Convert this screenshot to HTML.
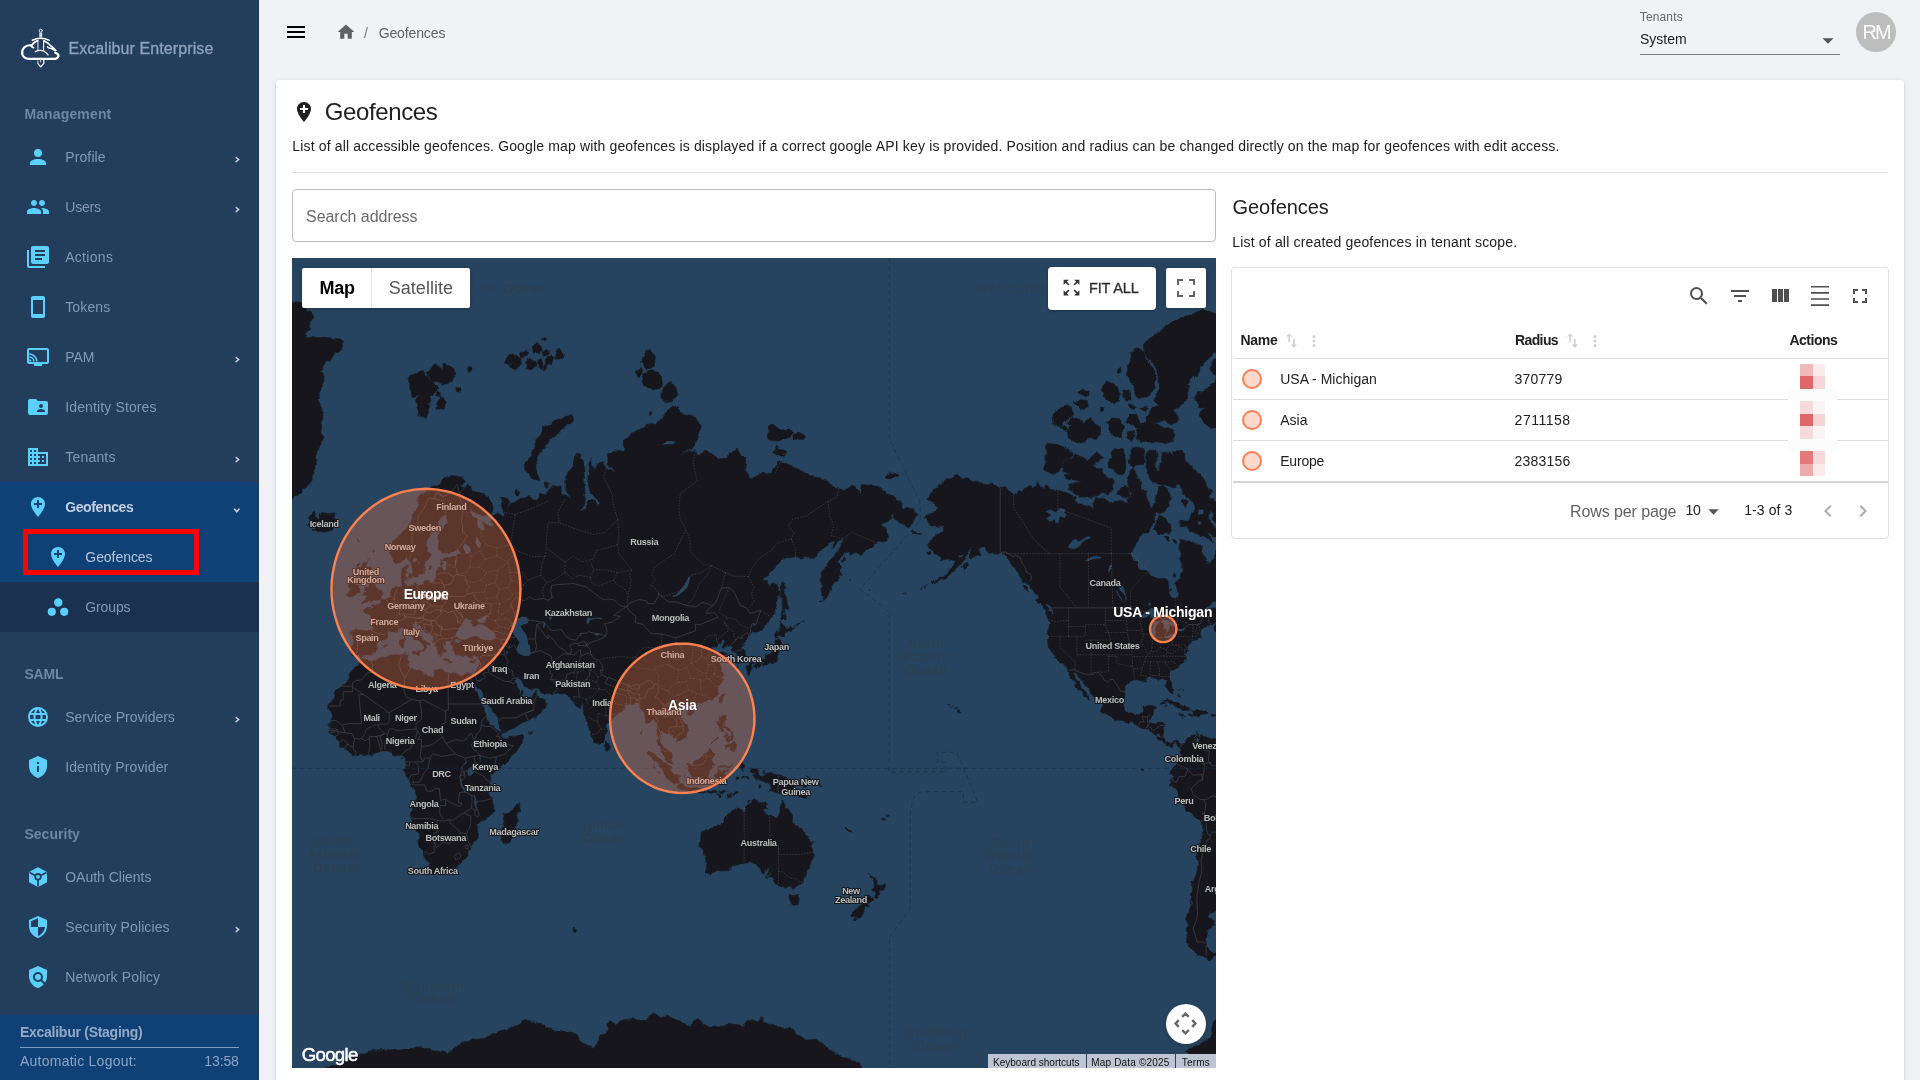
<!DOCTYPE html>
<html lang="en"><head><meta charset="utf-8"><title>Geofences</title>
<style>
*{box-sizing:border-box;margin:0;padding:0}
html,body{width:1920px;height:1080px;overflow:hidden}
body{will-change:transform;font-family:"Liberation Sans",sans-serif;background:#f0f2f6;color:#212121;position:relative;font-size:14px}
.abs{position:absolute;white-space:nowrap}
svg{display:block}
/* sidebar */
#side{position:absolute;left:0;top:0;width:259px;height:1080px;background:#233d5c;box-shadow:inset -1px 0 0 #1c3454}
#side .it{position:absolute;left:0;width:259px;height:50px}
#side .ic{position:absolute;left:26px;top:13px;width:24px;height:24px;fill:#5bd0ff}
#side .sub .ic{left:46px}
#side .tx{position:absolute;left:65px;top:0;line-height:50px;color:#8197b5;font-size:14px;letter-spacing:-0.1px}
#side .sub .tx{left:85px}
#side .ar{position:absolute;left:234.6px;top:24px;width:6px;height:7.2px;fill:#c9ccd2}
#side .hd{position:absolute;left:24px;color:#6d86a6;font-weight:bold;font-size:14px;letter-spacing:0.1px}
/* card */
#card{position:absolute;left:276px;top:80px;width:1628px;height:1010px;background:#fff;border-radius:4px;box-shadow:0 3px 1px -2px rgba(0,0,0,.2),0 2px 2px 0 rgba(0,0,0,.14),0 1px 5px 0 rgba(0,0,0,.12)}
.g{fill:#616161}
</style></head><body>

<div id="side">
<svg class="abs" style="left:18px;top:26px" width="44" height="44" viewBox="18 26 44 44" fill="none" stroke="#fff" stroke-linecap="round" stroke-linejoin="round">
<circle cx="40.7" cy="30.7" r="1.55" stroke-width="0.85"/>
<rect x="39.3" y="32.4" width="2.9" height="5.4" fill="#aab8ca" stroke="none"/>
<path d="M39.3 33.9h2.9M39.3 35.7h2.9" stroke-width="0.8" stroke-linecap="butt"/>
<path d="M32.3 40.2Q40.7 36.2 49.4 40.4" stroke-width="1.5"/>
<path d="M37.9 40.6V50.2" stroke="#b9c4d2" stroke-width="1.3" stroke-linecap="butt"/>
<path d="M43.6 40.6V50.6" stroke-width="1.1" stroke-linecap="butt"/>
<path d="M33.4 47.6Q31.2 46.9 31.4 45.5Q33.9 42 37.6 40.7" stroke-width="1.9"/>
<path d="M43.9 40.9Q48.6 42.8 51.2 46.2Q53.6 48.2 55.8 50.6" stroke-width="1.7"/>
<path d="M47.6 46.7Q48 48 49.2 48.1Q52 48.4 54.6 50.4" stroke-width="1.5"/>
<path d="M31.2 45.4Q27.2 44.6 24 47.6Q21.2 50.8 22.4 54.6Q24 58.6 28.6 58.9H55.4Q57.8 58.3 58.5 56.2Q58.7 53.8 55.2 52.7" stroke-width="2.2"/>
<path d="M35.3 51.6Q40 49.2 44 51.2Q46.5 52.7 48.1 54.9" stroke-width="1.3"/>
<path d="M43.8 59.6V63.4L40.7 66.8L37.9 63.6" stroke-width="1.25"/>
<path d="M37.9 63.6V61.2" stroke="#b9c4d2" stroke-width="1.2"/>
<path d="M40.7 58.2V62" stroke="#dfe5ec" stroke-width="0.9"/>
</svg>

<div class="abs" style="left:68.4px;top:37.26px;font-size:16px;line-height:24px;letter-spacing:0.091px;color:#8ea3bf;-webkit-text-stroke:0.3px #8ea3bf;">Excalibur Enterprise</div>
<div class="abs" style="left:24.4px;top:103.65px;font-size:14px;line-height:21px;letter-spacing:0.142px;font-weight:bold;color:#6d86a6;">Management</div>
<div class="it" style="top:132px;"><svg class="ic" viewBox="0 0 24 24"><path d="M12 4a4 4 0 0 1 4 4 4 4 0 0 1-4 4 4 4 0 0 1-4-4 4 4 0 0 1 4-4m0 10c4.42 0 8 1.79 8 4v2H4v-2c0-2.21 3.58-4 8-4"/></svg><div class="abs" style="left:65.2px;top:14.65px;font-size:14px;line-height:21px;letter-spacing:0.13px;color:#8197b5;">Profile</div><svg class="ar" viewBox="0 0 8 10"><path d="M1.2 0.6 6.6 5 1.2 9.4 0.2 7.6 3.3 5 0.2 2.4z"/></svg></div>
<div class="it" style="top:182px;"><svg class="ic" viewBox="0 0 24 24"><path d="M16 13c-.29 0-.62.02-.97.05 1.16.84 1.97 1.97 1.97 3.45V19h6v-2.5c0-2.33-4.67-3.5-7-3.5m-8 0c-2.33 0-7 1.17-7 3.5V19h14v-2.5c0-2.33-4.67-3.5-7-3.5m0-2c1.66 0 2.99-1.34 2.99-3S9.66 5 8 5C6.34 5 5 6.34 5 8s1.34 3 3 3m8 0c1.66 0 2.99-1.34 2.99-3S17.66 5 16 5c-1.66 0-3 1.34-3 3s1.34 3 3 3z"/></svg><div class="abs" style="left:65.2px;top:14.65px;font-size:14px;line-height:21px;letter-spacing:-0.172px;color:#8197b5;">Users</div><svg class="ar" viewBox="0 0 8 10"><path d="M1.2 0.6 6.6 5 1.2 9.4 0.2 7.6 3.3 5 0.2 2.4z"/></svg></div>
<div class="it" style="top:232px;"><svg class="ic" viewBox="0 0 24 24"><path d="M16 15H9v-2h7m3-2H9V9h10m0-2H9V5h10m2-4H7c-1.11 0-2 .89-2 2v14a2 2 0 0 0 2 2h14c1.11 0 2-.89 2-2V3a2 2 0 0 0-2-2M3 5v16h16v2H3a2 2 0 0 1-2-2V5z"/></svg><div class="abs" style="left:65.2px;top:14.65px;font-size:14px;line-height:21px;letter-spacing:0.298px;color:#8197b5;">Actions</div></div>
<div class="it" style="top:282px;"><svg class="ic" viewBox="0 0 24 24"><path d="M17 19H7V5h10m0-4H7c-1.11 0-2 .89-2 2v18a2 2 0 0 0 2 2h10a2 2 0 0 0 2-2V3a2 2 0 0 0-2-2"/></svg><div class="abs" style="left:65.2px;top:14.65px;font-size:14px;line-height:21px;letter-spacing:0.139px;color:#8197b5;">Tokens</div></div>
<div class="it" style="top:332px;"><svg class="ic" viewBox="0 0 24 24"><path fill-rule="evenodd" d="M3 3h18a2 2 0 0 1 2 2v12a2 2 0 0 1-2 2H3a2 2 0 0 1-2-2V5a2 2 0 0 1 2-2zM3 5v12h18V5z"/><path d="M8 19h8v2H8z"/><g transform="translate(3.3,16.5) scale(0.75) translate(-1,-21)"><path d="M1 10v2a9 9 0 0 1 9 9h2c0-6.08-4.93-11-11-11m0 4v2a5 5 0 0 1 5 5h2a7 7 0 0 0-7-7m0 4v3h3a3 3 0 0 0-3-3"/></g></svg><div class="abs" style="left:65.2px;top:14.65px;font-size:14px;line-height:21px;letter-spacing:-0.033px;color:#8197b5;">PAM</div><svg class="ar" viewBox="0 0 8 10"><path d="M1.2 0.6 6.6 5 1.2 9.4 0.2 7.6 3.3 5 0.2 2.4z"/></svg></div>
<div class="it" style="top:382px;"><svg class="ic" viewBox="0 0 24 24"><path d="M19 17h-8v-1c0-1.33 2.67-2 4-2s4 .67 4 2m-4-7a2 2 0 0 1 2 2 2 2 0 0 1-2 2 2 2 0 0 1-2-2 2 2 0 0 1 2-2m5-3h-8l-2-2H4c-1.11 0-2 .89-2 2v12a2 2 0 0 0 2 2h16a2 2 0 0 0 2-2V8a2 2 0 0 0-2-2"/></svg><div class="abs" style="left:65.2px;top:14.65px;font-size:14px;line-height:21px;letter-spacing:0.133px;color:#8197b5;">Identity Stores</div></div>
<div class="it" style="top:432px;"><svg class="ic" viewBox="0 0 24 24"><path d="M18 15h-2v2h2m0-6h-2v2h2m2 6h-8v-2h2v-2h-2v-2h2v-2h-2V9h8M10 7H8V5h2m0 6H8V9h2m0 6H8v-2h2m0 6H8v-2h2M6 7H4V5h2m0 6H4V9h2m0 6H4v-2h2m0 6H4v-2h2m6-10V3H2v18h20V7z"/></svg><div class="abs" style="left:65.2px;top:14.65px;font-size:14px;line-height:21px;letter-spacing:0.208px;color:#8197b5;">Tenants</div><svg class="ar" viewBox="0 0 8 10"><path d="M1.2 0.6 6.6 5 1.2 9.4 0.2 7.6 3.3 5 0.2 2.4z"/></svg></div>
<div class="abs" style="left:0;top:482px;width:259px;height:100px;background:#0f4076"></div>
<div class="it" style="top:482px;"><svg class="ic" viewBox="0 0 24 24"><path d="M12 2C8.14 2 5 5.14 5 9c0 5.25 7 13 7 13s7-7.75 7-13c0-3.86-3.14-7-7-7zm4 8h-3v3h-2v-3H8V8h3V5h2v3h3v2z"/></svg><div class="abs" style="left:65.2px;top:14.65px;font-size:14px;line-height:21px;letter-spacing:-0.377px;font-weight:bold;color:#c3d0e2;">Geofences</div><svg class="ar" style="left:233.4px;top:26.4px;width:7.6px;height:6px" viewBox="0 0 10 8"><path d="M0.6 1.2 5 6.6 9.4 1.2 7.6 0.2 5 3.3 2.4 0.2z"/></svg></div>
<div class="it sub" style="top:532px;"><svg class="ic" viewBox="0 0 24 24"><path d="M12 2C8.14 2 5 5.14 5 9c0 5.25 7 13 7 13s7-7.75 7-13c0-3.86-3.14-7-7-7zm4 8h-3v3h-2v-3H8V8h3V5h2v3h3v2z"/></svg><div class="abs" style="left:85.3px;top:14.65px;font-size:14px;line-height:21px;letter-spacing:-0.057px;color:#b4c3d9;">Geofences</div></div>
<div class="abs" style="left:22.6px;top:528.7px;width:176.2px;height:46.4px;border:5px solid #ff0000"></div>
<div class="it sub" style="top:582px;background:#1a3150;"><svg class="ic" viewBox="0 0 24 24"><circle cx="12.3" cy="7.5" r="4.2"/><circle cx="5.8" cy="16.8" r="4.1"/><circle cx="18.2" cy="16.8" r="4.1"/></svg><div class="abs" style="left:85.3px;top:14.65px;font-size:14px;line-height:21px;letter-spacing:-0.119px;color:#8197b5;">Groups</div></div>
<div class="abs" style="left:24.4px;top:663.65px;font-size:14px;line-height:21px;letter-spacing:-0.166px;font-weight:bold;color:#6d86a6;">SAML</div>
<div class="it" style="top:692px;"><svg class="ic" viewBox="0 0 24 24"><path d="M16.36 14c.08-.66.14-1.32.14-2s-.06-1.34-.14-2h3.38c.16.64.26 1.31.26 2s-.1 1.36-.26 2m-5.15 5.56c.6-1.11 1.06-2.31 1.38-3.56h2.95a8.03 8.03 0 0 1-4.33 3.56M14.34 14H9.66c-.1-.66-.16-1.32-.16-2s.06-1.35.16-2h4.68c.09.65.16 1.32.16 2s-.07 1.34-.16 2M12 19.96c-.83-1.2-1.5-2.53-1.91-3.96h3.82c-.41 1.43-1.08 2.76-1.91 3.96M8 8H5.08A7.92 7.92 0 0 1 9.4 4.44C8.8 5.55 8.35 6.75 8 8m-2.92 8H8c.35 1.25.8 2.45 1.4 3.56A8 8 0 0 1 5.08 16m-.82-2C4.1 13.36 4 12.69 4 12s.1-1.36.26-2h3.38c-.08.66-.14 1.32-.14 2s.06 1.34.14 2M12 4.03c.83 1.2 1.5 2.54 1.91 3.97h-3.82c.41-1.43 1.08-2.77 1.91-3.97M18.92 8h-2.95a15.7 15.7 0 0 0-1.38-3.56c1.84.63 3.37 1.9 4.33 3.56M12 2C6.47 2 2 6.5 2 12a10 10 0 0 0 10 10 10 10 0 0 0 10-10A10 10 0 0 0 12 2"/></svg><div class="abs" style="left:65.2px;top:14.65px;font-size:14px;line-height:21px;letter-spacing:-0.001px;color:#8197b5;">Service Providers</div><svg class="ar" viewBox="0 0 8 10"><path d="M1.2 0.6 6.6 5 1.2 9.4 0.2 7.6 3.3 5 0.2 2.4z"/></svg></div>
<div class="it" style="top:742px;"><svg class="ic" viewBox="0 0 24 24"><path d="M12 1 3 5v6c0 5.55 3.84 10.74 9 12 5.16-1.26 9-6.45 9-12V5M11 7h2v2h-2m0 2h2v6h-2"/></svg><div class="abs" style="left:65.2px;top:14.65px;font-size:14px;line-height:21px;letter-spacing:0.119px;color:#8197b5;">Identity Provider</div></div>
<div class="abs" style="left:24.4px;top:823.65px;font-size:14px;line-height:21px;letter-spacing:0.031px;font-weight:bold;color:#6d86a6;">Security</div>
<div class="it" style="top:852px;"><svg class="ic" viewBox="0 0 24 24"><path d="M12 2.2 21 7v10.2L12 22 3 17.2V7z"/><path d="M12 12 3.6 7.4M12 12l8.4-4.6M12 12v9.6" stroke="#233d5c" stroke-width="1.7" fill="none"/><circle cx="12" cy="11.8" r="3.7" fill="#233d5c"/><circle cx="12" cy="11.8" r="1.9"/></svg><div class="abs" style="left:65.2px;top:14.65px;font-size:14px;line-height:21px;letter-spacing:-0.014px;color:#8197b5;">OAuth Clients</div></div>
<div class="it" style="top:902px;"><svg class="ic" viewBox="0 0 24 24"><path d="M12 12h7c-.53 4.11-3.28 7.78-7 8.92zH5V6.3l7-3.11M12 1 3 5v6c0 5.55 3.84 10.73 9 12 5.16-1.27 9-6.45 9-12V5z"/></svg><div class="abs" style="left:65.2px;top:14.65px;font-size:14px;line-height:21px;letter-spacing:0.105px;color:#8197b5;">Security Policies</div><svg class="ar" viewBox="0 0 8 10"><path d="M1.2 0.6 6.6 5 1.2 9.4 0.2 7.6 3.3 5 0.2 2.4z"/></svg></div>
<div class="it" style="top:952px;"><svg class="ic" viewBox="0 0 24 24"><path d="M12 9a3 3 0 0 1 3 3 3 3 0 0 1-3 3 3 3 0 0 1-3-3 3 3 0 0 1 3-3m5.86 10.31C16.23 21.22 14.28 22.45 12 23c-2.56-.61-4.7-2.07-6.42-4.37C3.86 16.34 3 13.8 3 11V5l9-4 9 4v6c0 2.39-.64 4.61-1.92 6.67l-2.91-2.91c.52-.79.83-1.76.83-2.76a5 5 0 0 0-5-5 5 5 0 0 0-5 5 5 5 0 0 0 5 5c1 0 1.97-.31 2.76-.83z"/></svg><div class="abs" style="left:65.2px;top:14.65px;font-size:14px;line-height:21px;letter-spacing:0.172px;color:#8197b5;">Network Policy</div></div>
<div class="abs" style="left:0;top:1015px;width:259px;height:65px;background:#0f4076"></div>
<div class="abs" style="left:20px;top:1021.65px;font-size:14px;line-height:21px;letter-spacing:-0.268px;font-weight:bold;color:#93a9c6;">Excalibur (Staging)</div>
<div class="abs" style="left:20px;top:1046.5px;width:219px;height:1px;background:#7f9bbd"></div>
<div class="abs" style="left:20px;top:1050.65px;font-size:14px;line-height:21px;letter-spacing:0.243px;color:#8da4c2;">Automatic Logout:</div>
<div class="abs" style="left:204.3px;top:1050.65px;font-size:14px;line-height:21px;letter-spacing:-0.108px;color:#8da4c2;">13:58</div>
</div>
<svg class="abs" style="left:284px;top:20px" width="24" height="24" viewBox="0 0 24 24" fill="#000" ><path d="M3 6h18v2H3zm0 5h18v2H3zm0 5h18v2H3z"/></svg>
<svg class="abs" style="left:336.3px;top:22.2px" width="20" height="20" viewBox="0 0 24 24" fill="#616161" ><path d="M10 20v-6h4v6h5v-8h3L12 3 2 12h3v8z"/></svg>
<div class="abs" style="left:364px;top:22.65px;font-size:14px;line-height:21px;color:#757575;">/</div>
<div class="abs" style="left:378.7px;top:22.65px;font-size:14px;line-height:21px;letter-spacing:-0.124px;color:#616161;">Geofences</div>
<div class="abs" style="left:1639.8px;top:7.84px;font-size:12px;line-height:18px;letter-spacing:0.139px;color:#666;">Tenants</div>
<div class="abs" style="left:1640px;top:28.95px;font-size:14px;line-height:21px;letter-spacing:0.004px;color:#212121;">System</div>
<svg class="abs" style="left:1822px;top:37.5px" width="12" height="6" viewBox="0 0 12 6"><path d="M0.5 0.3h11L6 5.8z" fill="#555"/></svg>
<div class="abs" style="left:1640px;top:54px;width:200px;height:1px;background:#7a7a7a"></div>
<div class="abs" style="left:1856px;top:12px;width:40px;height:40px;border-radius:50%;background:#bdbdbd"></div>
<div class="abs" style="left:1862.5px;top:17.07px;font-size:20px;line-height:30px;letter-spacing:-2.052px;color:#fff;">RM</div>
<div id="card"></div>
<svg class="abs" style="left:292px;top:100px" width="24" height="24" viewBox="0 0 24 24" fill="#212121" ><path d="M12 2C8.14 2 5 5.14 5 9c0 5.25 7 13 7 13s7-7.75 7-13c0-3.86-3.14-7-7-7zm4 8h-3v3h-2v-3H8V8h3V5h2v3h3v2z"/></svg>
<div class="abs" style="left:324.7px;top:94.28px;font-size:24px;line-height:36px;letter-spacing:-0.364px;color:#212121;">Geofences</div>
<div class="abs" style="left:292.3px;top:135.65px;font-size:14px;line-height:21px;letter-spacing:0.149px;color:#212121;">List of all accessible geofences. Google map with geofences is displayed if a correct google API key is provided. Position and radius can be changed directly on the map for geofences with edit access.</div>
<div class="abs" style="left:292px;top:172px;width:1596px;height:1px;background:#e0e0e0"></div>
<div class="abs" style="left:292px;top:188.8px;width:924px;height:52.9px;border:1px solid #bdbdbd;border-radius:4px;background:#fff"></div>
<div class="abs" style="left:306.0px;top:204.76px;font-size:16px;line-height:24px;letter-spacing:-0.04px;color:#6a6a6a;">Search address</div>
<svg class="abs" style="left:292px;top:258px" width="924" height="810" viewBox="292 258 924 810" font-family="'Liberation Sans',sans-serif">
<rect x="292" y="258" width="924" height="810" fill="#26445f"/>
<defs><filter id="rough" filterUnits="userSpaceOnUse" x="280" y="250" width="950" height="830"><feTurbulence type="fractalNoise" baseFrequency="0.1" numOctaves="3" seed="11" result="n"/><feDisplacementMap in="SourceGraphic" in2="n" scale="6" xChannelSelector="R" yChannelSelector="G"/></filter></defs>
<path d="M360.5,659.0 362.2,658.7 366.2,661.1 368.8,660.8 371.0,661.5 375.6,659.4 380.7,656.9 386.0,655.5 391.5,655.1 396.1,654.8 399.5,655.1 405.2,653.7 408.6,654.4 407.5,656.9 407.7,659.0 408.9,661.1 408.0,662.8 406.0,665.6 408.9,667.0 410.3,668.3 414.8,669.0 420.3,670.7 424.5,674.7 431.3,677.7 434.2,676.0 434.3,671.7 439.0,669.0 442.7,669.3 445.6,671.7 448.7,673.4 454.7,674.0 459.8,675.7 462.3,674.7 465.5,673.7 468.0,673.7 469.2,674.5 469.9,678.8 470.3,681.9 473.4,687.4 474.9,691.3 478.3,697.8 482.3,704.0 483.1,707.7 483.3,711.3 485.4,715.2 488.2,719.1 489.5,723.3 493.4,725.9 498.8,730.9 500.5,732.4 500.0,735.0 501.0,735.7 505.3,738.3 511.6,737.0 517.2,735.8 523.1,734.3 523.5,738.3 519.2,745.4 515.3,753.1 506.3,762.4 498.3,769.2 493.6,774.7 490.2,779.7 488.5,782.7 489.1,787.6 489.7,793.6 491.6,797.7 492.8,798.8 492.6,805.5 493.2,811.4 490.8,814.9 482.3,820.0 476.4,825.7 477.4,829.3 477.7,832.4 478.3,838.2 472.9,841.7 470.0,844.7 470.7,848.0 468.6,853.8 465.6,857.2 461.2,863.0 456.7,867.7 450.1,871.0 447.8,871.8 443.9,871.3 440.2,871.8 434.2,873.9 429.9,872.3 429.6,870.8 428.2,867.1 429.1,863.0 426.2,857.7 424.1,853.2 420.4,846.9 418.8,840.1 418.5,835.3 415.7,829.3 412.6,823.3 410.7,818.0 411.9,812.0 412.9,807.0 415.8,803.6 416.4,798.8 414.3,794.2 415.0,793.3 413.9,789.0 412.4,785.4 412.0,784.0 411.0,781.9 407.6,777.9 404.0,773.9 402.2,770.2 404.2,767.1 404.6,765.4 405.2,761.7 405.5,759.7 404.9,756.8 402.9,756.8 401.5,755.1 397.8,755.7 394.4,756.0 392.4,753.1 390.4,751.1 387.0,750.0 384.1,750.1 380.7,750.8 376.7,752.4 373.7,753.7 371.3,754.7 368.8,753.7 365.9,753.2 360.2,754.0 355.4,755.8 351.7,754.0 346.6,750.2 344.3,748.2 341.7,746.8 339.6,743.9 338.3,741.1 335.8,737.9 334.1,736.7 332.9,734.3 329.8,732.9 330.1,729.6 329.5,727.7 327.7,725.9 329.5,724.2 330.4,721.9 331.2,719.1 331.8,715.8 330.4,711.9 328.8,707.7 328.9,706.2 330.7,702.5 331.9,698.8 334.9,695.7 336.1,691.3 339.2,688.1 340.6,685.3 345.2,683.6 348.3,680.6 350.0,677.4 349.1,676.5 349.4,673.7 351.0,671.0 353.1,667.8 355.7,666.6 358.0,665.1 359.8,661.1Z M517.5,802.6 519.5,806.7 520.9,812.2 519.0,814.3 517.8,818.5 517.8,820.7 516.1,826.3 513.8,832.7 513.0,836.7 511.0,841.7 505.7,843.6 502.5,841.7 501.5,836.5 500.3,832.4 503.3,827.2 503.2,823.3 502.3,818.8 503.6,814.3 509.0,813.4 512.7,810.2 514.7,806.7Z M469.9,678.8 471.7,682.3 474.7,686.0 475.4,683.6 476.7,680.3 476.3,683.9 475.9,685.2 478.8,687.3 481.0,690.9 483.1,694.7 485.5,697.5 488.2,701.6 488.7,705.6 491.6,709.5 494.1,712.8 496.8,717.0 498.3,719.4 498.8,723.0 499.5,725.6 500.3,730.0 500.9,731.9 505.3,731.5 509.6,729.7 514.4,728.0 517.1,726.4 522.4,724.4 525.8,721.5 528.3,720.2 531.2,719.1 534.3,719.1 537.4,716.4 540.6,713.4 541.4,711.0 543.1,708.9 544.3,708.0 546.0,705.6 547.4,702.5 546.3,702.2 544.0,699.1 541.1,698.5 538.7,696.8 537.6,694.4 537.7,691.4 537.6,690.3 536.4,692.2 534.6,693.8 532.0,696.3 529.5,697.5 526.9,697.2 524.6,697.8 523.2,696.9 523.2,696.0 524.1,693.8 523.9,691.9 522.9,691.1 521.8,692.8 521.9,695.5 521.2,694.7 519.8,691.9 519.9,690.3 518.5,688.4 516.1,686.5 515.3,683.9 514.1,681.6 513.3,680.6 514.4,680.0 515.3,678.7 516.4,677.4 518.4,678.3 519.9,678.7 521.8,681.9 523.8,685.7 526.9,687.7 530.0,689.3 533.5,689.8 537.3,687.9 539.1,688.4 539.7,690.6 541.7,692.7 545.1,693.5 549.7,693.8 552.5,694.4 554.5,694.4 557.9,693.9 561.1,694.1 565.0,693.3 567.7,695.2 569.0,697.5 571.1,698.8 573.3,700.9 574.6,701.4 577.3,701.3 576.4,702.5 573.7,702.6 575.3,705.1 577.4,707.4 579.3,708.0 581.0,707.1 582.8,704.8 583.7,703.1 584.5,704.9 584.1,706.8 584.5,708.9 584.4,713.1 585.8,719.1 587.2,723.9 588.1,725.6 590.1,731.2 592.8,736.0 594.2,739.8 595.0,742.8 597.9,745.1 599.7,743.2 602.0,741.8 604.4,738.7 604.4,736.7 604.4,734.1 605.7,730.6 605.3,726.5 607.4,723.0 608.1,722.4 609.7,721.2 611.4,719.3 614.2,717.0 617.9,713.7 621.5,710.7 623.9,709.2 624.8,707.1 625.6,705.4 627.9,705.3 631.0,704.9 633.9,704.3 635.3,702.5 637.3,702.5 638.4,703.1 639.0,705.9 640.1,708.0 641.5,709.7 643.3,711.9 645.5,714.9 646.2,718.2 645.2,722.1 648.1,722.7 651.2,721.2 653.2,719.1 654.9,720.8 655.5,724.4 656.3,727.8 657.8,732.5 658.0,736.7 657.6,739.7 656.8,742.8 656.9,745.1 658.6,745.2 660.0,747.4 661.6,749.5 662.0,750.0 662.7,752.8 663.5,756.2 665.4,759.7 668.1,761.9 671.7,764.5 673.8,764.4 672.8,761.4 671.3,757.4 670.7,753.1 668.1,750.5 665.4,748.5 663.5,747.7 662.3,744.2 661.3,741.9 659.9,742.1 659.6,738.2 661.2,734.4 661.6,732.2 661.7,730.3 663.0,729.4 664.4,729.9 664.3,731.9 665.4,731.9 668.3,733.2 670.1,735.0 671.7,737.9 674.3,738.3 676.1,739.6 675.3,743.6 677.7,741.9 679.9,740.9 681.9,738.6 684.2,737.6 685.4,736.9 687.3,735.7 687.9,733.1 688.6,731.2 688.1,728.7 687.1,724.7 685.2,721.8 683.5,720.5 680.5,717.6 679.9,715.8 678.1,713.7 678.5,710.7 680.4,709.4 680.9,707.5 682.5,707.1 684.5,705.6 685.6,705.3 687.6,705.7 689.1,705.3 689.3,707.4 690.6,709.4 691.3,708.1 691.3,706.6 693.0,705.7 695.3,705.3 698.2,704.3 700.3,703.6 700.4,701.7 702.1,703.1 703.3,702.2 705.4,701.7 709.2,699.9 711.8,698.6 713.2,696.4 714.9,695.0 717.8,693.5 717.6,691.4 717.8,689.3 719.5,687.4 721.3,685.2 723.2,682.9 724.2,681.0 724.6,679.0 721.2,677.7 722.6,676.4 724.0,675.9 723.9,674.0 724.0,673.0 721.5,670.4 720.8,667.6 719.5,664.2 716.9,662.7 717.4,660.4 719.6,658.1 721.3,656.7 725.6,655.3 726.2,653.3 724.6,653.0 722.6,652.8 720.8,651.9 718.3,653.7 715.8,654.4 716.2,652.1 713.5,650.6 711.8,649.0 712.2,647.6 714.4,646.8 715.8,646.8 717.5,644.2 720.1,642.7 721.8,640.7 723.8,640.5 724.9,641.4 723.5,644.2 722.0,647.6 721.9,648.5 723.3,647.9 726.3,646.1 730.4,644.4 731.7,645.2 733.7,645.3 733.3,648.6 732.0,650.6 733.9,652.3 736.3,652.1 737.4,653.3 736.6,654.9 737.1,657.1 737.4,658.5 736.6,661.5 736.7,662.7 737.1,664.2 739.4,663.2 740.7,662.7 742.7,662.3 744.5,661.5 745.4,659.9 745.8,658.1 745.4,654.4 744.1,652.1 742.5,649.0 740.0,647.0 740.5,644.4 742.5,643.5 744.8,641.4 746.5,638.6 746.7,637.1 748.2,635.2 749.4,633.8 752.5,632.1 755.3,633.2 762.2,629.5 763.7,627.2 765.9,624.4 770.8,618.4 774.1,612.2 776.4,607.9 776.9,601.3 778.1,596.7 779.5,593.5 778.1,589.1 778.9,588.3 775.0,583.5 769.3,585.0 766.7,586.4 766.4,581.6 762.2,581.6 765.6,577.6 770.3,572.8 776.1,566.8 780.6,561.4 784.6,557.2 792.0,557.5 800.8,558.1 806.2,556.1 811.1,558.6 816.8,556.1 820.5,550.7 823.0,547.8 830.3,542.4 833.8,541.8 833.0,550.1 836.7,543.0 846.6,538.8 843.8,543.0 837.8,550.7 832.3,558.6 827.6,564.6 823.0,569.4 820.5,575.1 820.2,582.6 821.0,589.8 822.5,595.8 823.0,599.5 825.6,596.7 828.1,593.1 828.7,589.8 832.4,589.3 832.1,585.0 838.4,581.3 837.5,577.6 839.5,574.0 841.9,574.0 840.4,569.9 841.8,566.2 838.1,561.9 841.2,557.8 843.8,554.1 847.2,553.6 849.5,551.6 850.0,554.7 853.7,551.3 861.7,554.1 866.5,550.7 873.7,543.0 886.7,540.0 887.6,535.7 884.5,527.3 882.2,524.7 886.5,522.7 890.2,519.3 891.9,513.7 893.6,519.3 908.6,526.7 909.1,527.7 910.9,524.7 914.9,518.6 918.6,515.1 914.9,511.9 912.3,508.3 904.9,509.1 900.7,505.8 901.2,502.4 895.0,498.2 890.7,494.3 883.6,491.1 877.9,486.2 862.3,484.5 861.7,487.8 860.9,493.5 856.0,488.7 853.7,486.2 843.8,489.5 835.3,488.3 832.4,484.5 819.6,477.7 809.7,476.0 804.0,472.4 792.6,466.0 778.4,460.4 775.5,465.1 771.3,472.4 764.1,471.5 755.6,476.8 749.9,478.6 744.2,471.5 745.7,464.2 744.2,456.5 737.1,449.4 728.6,452.5 724.3,458.4 718.1,458.9 712.9,454.5 705.8,452.0 700.1,454.5 694.5,448.4 688.8,451.5 679.7,456.5 690.2,448.4 698.7,437.8 701.0,427.6 695.9,418.0 683.1,414.2 674.0,405.1 667.4,410.4 661.7,418.0 656.1,425.2 647.5,424.0 637.6,431.0 629.0,435.5 623.3,441.0 624.2,449.4 606.6,453.5 607.1,463.2 612.8,469.7 614.0,475.1 609.1,468.8 603.7,464.2 602.9,459.4 597.7,463.2 594.9,469.7 592.3,465.1 591.5,459.4 590.1,460.4 589.5,468.8 587.8,476.8 588.6,485.4 590.6,493.5 595.2,497.4 600.0,503.5 598.6,506.5 592.3,499.0 588.6,501.3 586.4,509.4 579.3,511.6 582.1,508.7 586.4,501.3 584.1,493.5 583.8,485.4 584.4,476.8 583.8,467.9 582.1,459.4 577.8,456.5 574.4,459.4 571.9,467.9 566.7,476.8 567.0,485.4 567.3,493.5 571.6,499.7 566.5,496.6 562.2,492.7 560.8,487.0 549.7,487.8 546.0,495.9 540.9,494.3 536.6,499.0 531.8,500.5 531.8,494.3 526.6,496.6 520.9,498.2 515.3,502.0 511.0,503.5 509.9,507.2 507.6,509.4 510.0,502.8 507.9,499.0 500.5,496.3 502.7,502.0 502.2,508.7 503.6,512.3 503.0,515.8 500.7,515.1 497.6,513.0 493.9,517.2 490.5,522.7 491.9,525.4 488.2,526.0 485.4,523.4 482.3,521.7 483.1,526.7 485.4,529.9 481.1,529.9 476.3,526.0 476.0,522.7 476.3,517.2 472.6,513.7 469.5,508.0 474.9,510.9 482.5,514.4 486.8,515.1 490.8,514.8 493.1,512.3 494.8,508.0 493.9,503.5 490.5,500.1 484.0,495.1 477.4,491.9 472.6,491.1 468.3,485.8 464.9,487.0 458.7,484.5 465.8,482.0 459.8,477.7 456.1,476.0 450.7,475.4 444.7,479.4 438.5,483.7 431.3,487.8 422.8,494.3 417.1,500.5 418.3,506.5 414.3,513.7 412.0,519.3 408.6,526.0 404.6,531.2 399.2,535.0 394.7,538.8 391.8,541.8 391.2,547.8 391.5,551.3 392.1,557.5 393.4,559.5 394.1,562.2 397.4,564.6 400.1,563.8 402.3,561.9 405.2,559.2 407.7,554.1 408.6,558.6 409.3,562.7 411.1,566.2 413.9,571.7 413.4,574.8 414.0,578.1 415.4,578.3 417.7,578.1 418.8,575.1 421.7,574.3 423.8,571.5 424.7,566.0 425.4,561.4 428.2,559.7 429.6,557.2 431.3,554.7 426.5,549.8 426.2,543.6 426.8,539.4 430.5,533.8 435.0,530.6 437.6,524.7 438.5,520.7 440.3,518.6 443.3,517.2 446.0,517.2 447.3,517.9 449.7,522.7 447.0,524.7 443.0,530.3 438.7,535.0 437.9,540.0 438.5,544.8 437.9,547.2 439.9,551.0 442.7,554.4 448.3,552.7 454.0,551.0 456.4,550.4 459.1,549.5 460.4,552.7 463.2,553.9 460.1,554.1 458.1,555.3 457.1,556.7 452.7,556.4 447.7,556.7 445.7,557.2 444.3,559.5 447.0,562.5 446.6,565.2 445.9,569.7 443.3,569.9 441.6,566.0 438.6,567.8 437.0,572.5 437.3,576.6 434.2,580.3 433.3,582.8 430.3,583.3 429.6,581.1 427.1,581.3 421.5,584.0 417.8,585.5 416.6,584.5 415.4,581.8 411.7,584.5 408.3,585.2 406.2,583.3 404.2,581.1 404.6,577.6 406.3,574.3 408.4,572.8 406.6,570.2 407.3,567.5 407.5,566.0 405.6,566.8 401.8,569.4 400.6,571.5 400.3,575.1 400.3,577.3 401.9,580.6 401.8,583.5 402.0,585.6 401.6,587.2 400.1,586.4 397.8,588.1 396.6,587.6 394.1,587.9 390.8,590.0 390.2,592.4 389.4,594.0 388.7,594.7 387.4,597.0 386.4,597.4 384.0,598.8 382.6,599.2 381.9,600.1 381.7,602.6 380.4,603.9 377.9,604.8 377.6,605.7 376.4,606.6 373.9,606.1 373.7,604.8 371.8,604.8 372.7,607.0 373.0,609.4 371.6,609.4 368.8,608.5 366.2,608.9 363.6,610.5 363.9,611.9 364.9,613.0 367.8,613.4 369.5,614.3 371.0,615.2 371.8,617.6 374.0,619.9 374.2,622.1 373.7,626.0 373.0,630.5 371.6,631.3 368.9,630.9 366.5,630.6 361.2,630.3 357.2,630.3 355.4,629.5 353.4,630.9 350.8,632.3 352.3,635.6 352.7,639.6 352.0,643.1 350.6,646.3 350.3,648.4 351.1,648.6 351.1,649.7 352.0,649.4 352.1,651.4 351.7,654.7 354.8,654.8 356.3,654.1 357.5,654.1 359.1,655.7 359.4,656.5 360.1,657.7 361.4,658.3 362.1,657.9 363.4,656.5 364.7,655.8 367.3,655.7 370.3,655.4 371.1,655.8 372.7,653.3 374.5,652.6 375.3,652.4 375.9,649.9 377.9,648.3 376.9,647.6 376.4,645.9 377.3,643.9 378.9,641.8 379.8,641.3 380.9,639.7 383.5,638.8 386.3,636.9 386.7,635.2 385.9,633.6 387.0,631.3 388.7,630.9 390.4,631.2 392.5,631.3 394.1,632.3 396.2,631.9 397.2,630.3 398.0,629.7 400.1,629.1 401.3,627.4 402.7,627.0 405.3,628.3 406.6,630.3 407.3,632.9 408.9,634.8 410.9,635.9 412.1,637.3 413.1,638.4 414.4,639.4 416.0,639.4 417.8,640.7 418.1,641.6 419.4,641.4 420.8,643.9 423.1,647.6 421.8,650.5 422.1,651.5 423.0,651.4 424.5,649.6 425.9,647.9 426.0,647.3 425.1,645.3 424.5,643.9 425.2,642.6 426.3,642.1 428.5,643.7 429.6,644.6 429.9,643.3 428.4,641.4 425.3,639.6 422.5,637.9 423.3,636.7 421.0,636.6 417.7,634.5 415.7,630.1 413.1,628.3 412.3,626.6 412.9,624.8 412.4,622.8 414.6,621.7 416.5,621.9 415.7,622.5 416.7,625.1 418.4,623.2 419.7,624.7 420.6,628.1 422.5,629.6 424.1,630.5 426.8,632.3 428.8,633.8 430.1,634.8 431.6,635.9 432.5,636.9 432.6,638.9 432.7,642.2 433.3,643.5 434.2,644.3 434.9,645.7 436.3,647.7 437.3,649.9 439.2,650.1 438.0,650.5 437.4,651.4 437.9,652.4 438.9,653.9 439.0,655.5 439.5,655.8 440.2,654.7 441.2,656.9 441.6,655.5 443.3,656.7 442.2,652.8 444.1,653.2 442.7,651.5 444.4,651.4 445.7,652.4 445.7,650.6 444.4,649.6 442.4,647.9 443.6,647.0 441.9,644.2 441.6,642.0 442.6,641.6 443.6,642.9 444.8,644.1 444.6,642.9 445.5,644.1 445.1,642.7 446.7,643.4 445.3,642.0 444.7,641.1 446.7,640.4 448.4,640.7 451.0,640.7 451.4,641.3 453.5,641.6 451.8,643.7 453.1,642.4 455.5,640.2 458.7,640.1 459.9,639.7 459.5,642.4 456.7,642.4 455.0,642.4 452.4,643.3 451.7,643.9 451.5,645.7 453.8,645.5 453.1,646.5 453.7,647.9 453.4,648.8 454.5,649.7 453.4,649.9 452.3,648.8 452.1,650.1 452.7,650.5 454.8,651.7 454.7,653.3 455.3,654.7 455.2,655.9 457.7,655.3 460.1,656.1 461.6,657.6 463.1,657.3 463.8,657.6 464.8,655.3 468.3,656.4 470.6,658.2 473.7,657.3 475.7,655.5 477.9,656.4 479.7,655.1 480.2,656.2 479.1,657.3 479.0,660.1 479.1,663.7 478.3,665.6 476.9,669.3 476.1,671.7 475.3,673.7 473.4,675.0 470.6,675.2 469.2,674.5Z M361.1,603.2 363.2,601.0 364.5,599.0 365.6,598.1 368.8,598.1 369.6,596.7 368.2,597.2 366.1,596.5 362.8,596.1 362.2,594.9 363.9,594.0 365.6,592.6 365.6,590.7 363.8,590.7 364.9,589.1 364.4,587.9 366.6,588.3 368.5,588.1 368.8,587.6 368.8,585.2 369.2,584.5 368.1,584.5 367.1,582.6 367.6,580.6 367.1,580.8 365.8,581.1 364.8,581.8 363.4,580.8 363.4,581.9 362.7,580.1 364.1,577.8 363.6,575.3 360.8,578.6 361.4,575.1 361.7,573.0 359.7,571.5 360.7,569.9 361.1,568.3 360.8,566.2 362.2,563.3 363.1,561.2 367.2,561.4 368.7,561.1 368.5,562.2 365.9,565.4 365.4,567.3 367.9,566.2 371.6,566.2 372.2,567.3 371.4,569.1 370.3,571.5 369.9,573.6 367.6,575.1 370.2,575.1 371.6,576.2 373.3,580.1 374.0,581.8 375.6,582.6 377.1,584.4 377.6,587.0 378.3,589.1 377.6,590.0 378.9,589.9 381.0,590.0 382.2,591.7 382.3,592.3 381.0,594.7 379.6,596.5 381.4,597.3 381.1,598.5 380.1,599.4 378.0,600.2 376.9,599.8 375.1,600.2 374.2,599.9 372.9,600.4 371.8,600.8 370.3,601.2 368.9,600.4 367.6,600.8 366.9,602.5 365.5,601.9 363.6,602.5 362.5,603.7 361.5,603.0Z M349.4,597.0 348.0,595.4 347.6,594.0 349.3,593.1 349.1,591.8 350.6,589.8 351.6,588.5 349.7,588.6 348.4,587.9 348.3,585.1 348.9,583.5 352.8,583.5 354.3,581.9 352.4,581.8 353.7,579.3 356.3,578.2 357.5,579.1 358.4,579.1 359.8,579.0 360.8,580.8 361.5,581.8 361.7,583.1 360.6,584.0 359.9,584.9 359.5,586.4 359.9,588.1 360.2,589.9 359.2,593.7 357.5,593.7 355.8,594.7 353.8,595.4 353.0,596.3Z M323.3,533.1 319.6,532.2 316.7,530.6 312.7,530.5 312.7,528.8 314.9,528.3 314.4,527.0 313.0,524.4 308.9,524.4 309.0,523.4 312.7,522.3 314.2,519.6 307.6,519.3 309.6,515.8 312.2,512.7 313.6,512.7 316.4,516.2 317.3,521.3 319.6,517.9 320.1,515.1 321.5,517.6 323.5,514.6 325.2,514.8 327.9,515.5 328.7,514.4 330.4,514.8 331.2,512.1 335.9,513.1 335.1,517.6 338.0,518.9 338.8,522.7 336.7,525.0 334.1,527.7 330.1,530.6 325.2,532.8Z M424.2,419.8 420.0,414.2 417.1,407.8 415.7,399.7 421.4,395.5 412.9,397.6 410.6,391.2 410.0,386.8 407.7,378.4 410.0,374.4 417.1,373.6 423.7,370.3 428.5,377.6 433.1,385.3 438.2,388.3 431.3,396.9 429.1,407.8 426.2,415.5Z M431.1,381.5 428.2,372.0 433.6,365.3 441.3,368.7 444.1,363.6 454.1,369.5 454.7,377.6 450.4,382.2 442.7,383.8 435.6,381.5Z M439.6,398.3 442.7,397.6 446.4,402.4 442.7,410.4 437.0,408.4 437.6,402.4Z M437.0,392.6 440.4,393.4 439.3,397.6 435.9,396.9Z M467.2,367.8 471.7,367.0 472.3,370.3 468.3,371.2Z M454.7,387.5 461.5,388.3 460.6,391.2 455.5,390.5Z M504.7,361.9 508.1,355.7 513.8,354.8 514.7,359.3 509.9,362.8Z M511.6,367.8 511.0,360.1 517.5,355.7 521.2,358.4 520.1,365.3 515.5,370.3Z M525.8,368.7 524.6,361.9 529.5,358.4 535.2,361.9 534.6,366.2 529.8,369.5Z M537.4,367.0 536.6,361.0 541.1,358.4 543.4,363.6 542.0,368.7Z M544.0,369.5 545.1,363.6 548.0,364.5 547.1,369.5Z M546.8,364.5 546.0,357.5 550.8,354.8 554.5,358.4 552.5,364.5Z M555.4,359.3 554.5,352.1 560.2,349.3 563.6,353.0 561.6,358.4Z M534.3,353.0 533.2,347.4 538.0,344.6 542.3,348.4 540.0,353.0Z M541.7,340.7 542.8,337.3 545.7,337.7 545.1,340.7Z M521.8,357.5 520.9,353.0 526.6,350.2 528.1,354.8Z M544.0,354.8 543.4,350.2 548.0,348.4 548.5,353.9Z M540.0,480.7 533.7,479.4 528.9,476.0 524.1,471.5 525.2,466.0 526.9,462.3 530.9,455.5 533.7,448.4 536.0,439.9 540.3,434.4 545.1,427.6 552.2,422.8 560.8,418.0 567.9,414.8 572.1,414.8 570.7,422.8 562.2,428.7 550.8,437.8 545.1,446.3 540.3,453.5 537.4,458.4 535.7,465.1 536.6,472.4 538.9,477.7Z M652.6,389.7 644.7,383.8 643.3,374.4 648.9,370.3 656.1,372.0 661.7,377.6 662.6,383.8 658.9,389.0Z M663.2,401.7 660.6,395.5 664.0,387.5 668.9,382.2 675.4,386.8 677.4,394.1 671.7,401.1Z M646.1,369.5 640.4,361.0 646.1,352.1 650.4,349.3 655.5,355.7 654.1,366.2Z M636.1,376.8 635.6,371.2 640.4,368.7 642.7,373.6 639.8,377.6Z M769.8,440.5 767.6,434.4 769.3,425.2 774.1,424.0 778.9,429.3 785.5,431.0 789.7,428.1 793.4,432.2 791.2,436.7 785.5,438.8 778.4,441.0Z M794.6,439.4 794.0,434.4 799.7,432.7 805.4,435.5 803.4,439.4Z M778.4,456.5 775.0,453.5 776.9,449.4 782.6,449.9 786.0,453.5 784.1,456.5Z M775.8,448.4 776.4,445.8 778.9,446.3 778.7,448.4Z M885.9,478.2 885.6,475.1 889.9,472.0 895.8,472.9 897.0,476.0 892.1,478.2Z M783.2,583.0 784.9,587.4 784.9,592.1 785.5,596.7 786.0,602.2 787.8,606.6 788.9,609.4 784.1,607.0 782.8,612.2 784.1,615.1 785.5,619.3 785.2,620.3 783.3,618.0 781.5,620.9 780.8,617.6 781.5,613.0 781.4,607.9 781.5,599.5 780.2,594.4 780.6,587.9 781.9,583.5Z M781.1,622.5 785.1,627.2 788.9,628.7 790.6,627.2 792.0,630.9 788.0,632.5 785.1,635.2 784.8,636.6 780.1,634.2 778.2,635.2 776.7,634.4 778.8,637.1 777.5,637.3 775.8,638.6 775.2,635.9 775.1,634.0 776.8,631.1 778.4,631.7 780.2,628.9 780.5,625.0 780.2,622.7Z M779.6,638.6 779.8,641.8 781.1,645.2 780.1,647.9 779.8,650.1 778.4,650.3 778.2,654.8 777.2,657.3 777.9,659.4 776.4,661.3 775.1,662.2 775.2,659.7 774.5,661.3 773.7,660.8 772.3,663.2 772.3,661.5 770.4,663.2 768.7,663.0 767.0,663.3 766.6,661.6 766.6,663.5 766.7,664.4 764.7,665.6 763.5,667.1 761.4,665.6 761.6,664.4 762.4,663.0 760.4,663.0 758.3,663.2 754.0,664.1 752.9,665.4 749.8,665.4 749.6,663.9 751.1,663.9 752.9,662.2 754.6,660.2 756.5,659.9 759.2,659.9 761.3,659.5 761.9,659.1 763.4,660.1 764.3,659.5 764.4,657.4 766.3,654.9 768.0,653.0 767.1,654.6 767.6,655.7 770.5,654.2 772.8,651.5 775.0,647.9 774.7,644.2 775.2,641.6 776.5,639.2 777.7,640.7 778.9,639.0 778.1,638.1Z M758.6,664.1 760.3,664.4 760.6,665.8 759.0,667.8 757.2,667.0 755.7,669.6 754.3,668.0 752.8,667.5 754.9,665.8 755.6,664.9Z M749.8,665.4 751.9,666.6 751.9,667.8 751.9,670.0 751.2,672.4 750.9,674.2 749.0,675.4 747.7,674.5 747.4,674.0 747.6,672.0 747.1,670.5 746.7,669.5 745.8,668.0 746.7,666.8 748.2,666.6Z M723.0,693.8 724.3,694.7 723.2,697.8 721.9,701.7 721.1,704.3 719.4,702.2 719.1,699.4 720.1,697.1 721.8,694.6Z M692.2,709.8 693.0,711.3 691.6,714.0 688.8,715.5 686.5,714.6 686.3,712.2 688.2,710.4 690.5,710.1Z M721.1,714.2 724.9,714.6 725.6,719.1 723.2,722.1 723.2,725.0 723.5,726.2 725.7,727.1 727.2,727.7 729.9,728.7 730.2,732.1 728.0,731.2 726.3,730.0 725.2,729.1 723.2,728.3 721.6,729.0 720.3,728.6 720.1,726.7 719.3,725.6 718.3,723.6 718.1,721.0 719.5,721.9 719.5,720.3 719.6,717.3 720.2,715.5Z M734.3,740.2 736.7,743.6 737.3,747.7 736.3,750.2 734.6,748.0 734.8,750.8 733.9,752.2 733.3,750.8 731.7,751.4 730.0,749.4 730.6,747.7 728.3,746.2 726.6,747.1 724.5,748.5 724.6,746.2 726.0,745.1 728.3,743.6 729.6,744.9 731.9,743.9 733.4,742.5 734.3,742.6Z M730.9,732.2 733.7,732.4 735.0,736.4 732.9,736.1 731.3,734.4Z M731.1,735.1 732.9,735.8 733.6,739.0 732.3,739.3 731.1,737.0Z M728.0,736.9 728.7,738.5 728.0,741.6 727.2,742.4 725.5,741.3 726.7,738.5Z M724.2,734.1 727.6,735.0 725.9,737.6 724.1,738.4Z M730.2,735.9 729.9,738.7 728.2,741.3 728.9,738.7Z M730.3,739.2 731.6,739.5 731.4,740.6 729.6,740.8 729.4,739.8Z M719.8,729.4 722.0,729.7 722.2,733.2 720.9,733.1 720.2,730.9Z M717.2,735.6 716.8,738.7 715.1,740.3 710.7,744.2 711.4,742.8 715.2,739.0 716.4,736.7Z M709.4,748.2 712.1,749.7 713.2,751.5 716.5,753.2 714.7,754.1 714.7,755.7 712.7,756.1 711.8,758.8 712.7,762.1 715.6,765.4 712.8,765.5 711.5,769.6 709.6,771.8 708.8,774.5 708.1,776.7 707.1,778.4 703.4,780.0 703.1,777.7 698.7,777.6 695.9,777.9 695.3,778.2 691.0,776.6 690.2,773.5 688.2,770.3 687.8,768.2 687.2,765.6 687.5,763.5 689.2,762.3 691.0,763.4 693.0,764.4 693.6,761.9 696.2,759.9 698.9,759.1 701.5,755.7 701.9,755.1 704.3,754.1 705.1,753.1 707.5,751.2 709.1,748.5Z M648.4,752.3 653.2,753.2 654.6,753.4 656.1,755.4 658.0,757.4 661.3,759.8 664.0,762.2 665.9,763.4 669.4,765.4 672.0,767.3 671.6,770.5 674.1,771.0 675.7,774.7 677.7,774.9 679.0,776.7 678.4,780.2 678.4,783.3 678.1,785.0 676.7,783.7 674.8,785.0 674.0,784.0 672.8,782.7 670.0,780.7 668.1,779.0 664.7,775.5 662.7,771.0 660.0,767.6 658.3,763.2 655.8,761.7 653.6,759.0 650.7,756.4 648.4,754.0Z M679.0,785.0 681.1,785.6 681.7,785.2 685.5,786.0 686.2,787.4 687.8,787.7 691.3,788.0 692.7,786.4 694.5,787.3 696.2,787.9 698.0,788.7 699.3,790.2 701.6,790.2 702.8,790.6 702.6,791.6 703.1,793.2 701.6,792.8 698.7,792.2 695.9,791.9 693.0,791.7 690.8,791.3 687.3,790.3 685.6,790.5 683.6,790.2 680.2,789.3 676.7,787.4 678.2,786.4Z M703.0,791.3 705.0,791.3 706.4,792.0 705.0,793.3 703.3,792.2Z M707.4,791.7 709.2,791.9 708.7,793.6 706.8,793.2Z M709.5,791.5 712.7,791.3 713.8,791.6 715.8,791.9 716.1,793.2 712.9,793.3 710.1,794.0 709.4,792.8Z M718.2,791.9 721.5,791.6 726.7,791.3 727.2,792.3 724.3,793.3 721.5,793.8 718.2,793.3Z M715.8,794.9 718.6,794.9 721.1,797.4 719.2,797.7 715.8,795.9Z M728.6,797.8 729.2,795.3 732.9,793.6 738.5,792.0 739.4,792.3 737.1,793.9 732.9,795.6 730.0,797.4Z M733.3,763.4 732.4,763.9 729.7,765.6 724.3,765.4 721.5,764.5 720.9,765.2 719.2,766.2 718.1,767.9 717.9,770.2 716.8,773.6 715.4,775.9 715.6,778.3 717.5,779.6 716.9,782.9 717.1,784.2 719.9,784.2 719.8,781.2 719.2,776.7 720.9,775.7 721.5,777.6 723.0,779.7 723.5,782.0 725.2,781.9 726.7,780.7 726.0,779.4 725.2,777.3 724.2,775.9 722.6,773.9 724.2,772.9 726.6,770.8 728.3,770.9 728.2,769.8 723.2,770.8 720.8,772.2 718.9,770.6 718.6,766.9 721.5,766.9 724.3,766.8 727.3,766.8 730.0,767.2 731.4,766.1 732.6,765.4 733.4,764.1Z M741.1,761.9 743.4,763.9 743.4,766.5 741.1,767.3 742.5,770.6 740.5,769.1 740.0,765.9 740.1,763.4Z M741.4,776.3 745.7,776.2 749.4,777.0 749.4,779.2 745.7,777.9 741.4,778.2Z M736.0,777.0 738.5,777.0 739.1,779.0 736.6,779.2Z M753.1,769.3 757.0,770.3 758.7,770.6 759.3,773.9 762.7,777.7 765.6,774.7 767.8,772.9 769.5,772.3 772.7,773.9 777.5,775.5 779.2,775.9 784.1,777.9 785.9,778.3 788.5,779.3 791.5,781.3 792.0,783.0 795.4,785.0 797.1,785.3 797.9,787.0 795.4,787.4 797.4,790.2 799.7,793.6 802.0,794.0 803.5,795.9 806.4,797.5 805.7,798.5 800.3,797.4 795.9,795.3 794.0,792.8 791.9,790.9 787.8,789.6 785.2,792.8 784.6,794.2 781.8,794.5 778.4,794.2 776.7,792.5 772.7,791.3 769.0,792.2 770.1,789.3 771.7,787.9 770.0,783.9 766.4,782.0 761.3,780.2 758.5,779.6 757.7,778.6 755.3,779.6 753.5,776.5 752.6,776.0 754.2,775.6 757.3,774.6 754.5,773.9 752.5,774.2 749.9,772.5 750.6,770.7 749.9,770.2Z M810.1,780.2 810.8,781.3 809.7,783.9 804.5,786.2 802.7,786.2 799.3,784.6 799.4,783.7 801.7,783.9 804.3,782.6 806.0,783.7 807.9,782.4 808.4,780.2Z M806.2,775.6 809.7,777.9 812.2,780.4 812.1,781.7 811.4,779.6 808.8,777.6 806.1,776.0Z M817.1,782.4 818.2,783.9 820.7,785.9 820.5,787.7 818.8,786.7 817.3,784.7Z M843.8,826.3 847.8,828.7 852.3,833.3 851.2,833.6 847.5,830.8 844.4,828.1Z M881.9,818.3 885.3,818.8 884.7,820.9 881.9,820.9Z M888.7,814.9 889.0,816.1 885.9,817.1 885.6,816.1Z M605.4,740.1 608.4,743.7 609.7,746.2 610.1,748.7 608.0,750.8 606.4,751.3 605.5,751.0 604.4,748.4 604.3,745.4 604.6,742.6 604.9,740.6Z M782.7,798.8 783.8,802.3 785.2,804.3 786.9,809.0 788.3,808.9 790.5,812.7 791.9,817.0 792.7,821.0 794.9,824.0 797.6,826.0 799.0,826.3 801.7,829.8 804.0,833.6 805.4,833.3 806.4,836.7 807.7,838.1 810.8,840.9 812.2,842.6 813.2,840.7 812.8,844.2 812.8,846.9 813.8,849.3 814.1,851.8 814.3,853.3 812.9,858.7 812.3,862.5 811.2,865.0 809.0,867.5 807.6,870.6 806.5,872.7 806.1,875.1 804.5,877.0 803.7,881.9 803.9,883.4 799.7,884.5 798.3,884.9 794.9,887.6 793.7,889.3 791.5,887.6 789.7,887.0 789.7,885.2 788.6,886.3 785.5,888.4 782.6,886.7 780.1,886.5 777.5,885.4 774.8,882.2 773.8,878.1 772.4,876.5 770.1,876.9 771.3,874.4 770.0,871.8 769.0,875.1 766.6,875.5 768.3,872.5 769.4,867.7 769.3,866.0 768.6,867.9 765.3,871.1 763.9,873.7 763.1,874.4 761.6,873.2 760.9,869.9 759.0,867.1 757.5,864.7 754.2,864.4 750.3,862.7 744.2,863.2 735.7,865.4 730.3,868.4 728.0,870.6 724.0,870.7 718.9,871.0 716.9,872.7 712.7,874.7 709.1,874.8 707.3,874.1 704.8,872.4 704.4,869.5 706.3,868.8 706.5,864.5 704.6,858.7 703.3,853.7 702.0,850.3 700.4,846.7 699.1,845.3 700.1,843.3 700.6,841.4 700.9,835.8 702.0,831.8 702.1,833.3 704.7,831.3 709.2,828.4 714.7,827.2 721.2,825.4 724.9,820.3 727.0,815.5 728.9,818.2 728.9,815.2 731.1,812.8 733.3,810.5 738.4,807.7 741.7,810.8 742.0,811.4 745.1,810.9 746.7,806.7 749.5,803.9 752.5,802.9 753.2,800.1 754.5,800.1 757.0,802.3 759.0,802.7 763.6,802.3 766.3,803.2 764.1,806.4 762.4,811.1 766.7,814.0 770.7,815.9 774.7,818.9 777.9,818.8 779.5,814.3 780.1,811.1 779.9,807.0 780.8,804.5 781.5,802.3 782.1,799.4Z M788.9,895.3 791.2,895.7 793.6,896.8 795.4,896.3 798.3,895.5 799.1,897.4 799.1,900.8 798.0,903.9 798.3,904.7 795.0,906.3 792.6,905.9 790.3,900.8 789.2,898.2Z M868.5,872.5 869.5,872.6 872.5,875.6 873.8,877.6 874.7,879.5 874.5,881.1 876.2,879.9 877.6,881.6 878.5,884.0 880.8,885.0 883.6,883.6 885.2,884.1 883.8,887.6 883.3,889.2 880.5,890.7 879.8,894.0 875.9,898.5 874.5,897.4 875.1,895.7 875.6,893.3 875.1,892.3 873.1,891.1 871.5,889.9 872.4,889.0 874.2,886.3 874.5,885.4 873.8,881.6 872.8,879.5 870.5,876.5 869.7,875.1Z M868.5,894.4 869.4,895.7 870.2,897.2 873.1,896.3 873.0,899.0 871.4,901.6 868.7,904.9 869.7,906.9 867.4,907.5 864.4,909.4 863.6,912.2 862.9,915.4 860.3,917.8 857.6,918.6 856.2,918.4 854.3,916.7 851.2,916.5 850.8,914.9 853.2,911.6 854.7,910.2 856.9,907.7 860.6,905.7 863.6,902.8 864.3,901.8 865.1,899.1 866.8,896.7Z M854.3,919.0 855.7,919.4 854.3,921.1 853.5,920.4Z M957.9,709.4 960.3,710.9 960.8,711.6 958.6,713.3 957.4,711.0Z M955.7,707.1 957.6,707.4 957.0,708.3 955.7,707.8Z M951.9,704.9 952.7,705.7 952.2,706.3 951.2,705.7Z M947.3,703.4 948.2,703.6 947.8,704.3 946.9,704.0Z M404.0,632.5 404.3,634.2 404.0,636.9 403.5,638.6 401.8,636.7 402.0,634.2Z M403.5,639.2 404.9,640.5 404.9,643.9 404.5,647.0 402.0,647.9 401.2,647.2 401.2,642.7 400.6,640.3Z M421.7,650.5 420.3,653.0 420.3,655.8 418.0,654.4 415.7,653.7 413.1,652.6 412.7,651.0 415.1,650.5 417.1,651.2 420.0,650.6Z M444.4,659.7 447.0,660.4 449.3,660.6 452.1,660.9 451.8,661.8 448.4,662.0 444.4,661.1Z M475.7,659.4 473.7,661.3 474.0,662.0 471.2,663.2 469.5,662.7 469.2,661.5 471.0,660.6Z M443.6,647.6 445.9,649.0 447.1,651.2 445.3,650.1 443.9,648.8Z M386.4,644.1 387.1,644.8 386.0,646.5 384.1,645.5 385.3,644.4Z M412.3,574.6 413.1,576.8 411.7,579.1 409.3,579.1 408.9,576.6 410.9,575.1Z M406.6,577.1 408.0,578.6 407.7,579.8 405.7,579.6 405.2,577.8Z M431.3,564.9 431.1,567.8 429.1,570.2 428.8,567.8 429.9,565.4Z M425.9,568.1 424.8,571.5 423.9,574.0 424.4,571.0Z M441.3,561.4 443.6,562.2 441.9,563.5 440.0,564.9 439.5,562.7Z M441.6,558.9 442.9,559.7 441.6,560.8 440.2,559.7Z M356.8,539.7 358.5,541.2 358.0,542.1 356.3,541.2Z M374.5,549.0 374.3,551.9 373.6,554.1 372.7,551.9Z M367.9,558.3 369.6,559.2 368.5,560.0Z M359.5,561.9 359.7,563.5 357.4,566.0 356.3,568.9 356.5,566.8 357.1,563.8Z M359.4,566.2 360.5,568.3 360.2,569.7 358.1,567.8Z M359.9,571.7 361.1,572.8 359.4,573.5Z M515.5,489.9 519.5,491.9 518.4,495.1 515.8,495.1 514.7,491.9Z M544.3,482.0 549.1,484.5 548.0,487.8 545.1,487.8Z M577.3,454.0 581.2,455.0 580.1,457.4 577.0,457.4Z M843.8,558.1 845.8,561.4 842.4,561.9Z M648.9,411.7 652.1,412.9 651.2,415.5 648.4,414.8Z M822.2,599.7 821.0,602.2 819.0,602.6Z M800.6,622.5 798.0,625.0 795.4,626.6 796.3,625.4Z M805.4,619.7 802.8,621.7 804.5,621.1Z M793.7,626.8 791.5,628.9 790.9,629.7 793.2,628.2Z M529.2,731.8 532.3,732.2 530.6,732.9 528.9,732.7Z M489.1,784.6 489.8,786.6 488.8,785.9Z M402.0,757.5 402.6,758.8 401.5,759.0Z M534.6,829.0 536.0,829.9 534.9,830.4Z M541.1,826.3 541.7,827.2 540.6,827.8Z M573.6,927.2 577.8,929.0 576.4,931.6 573.0,931.2 573.0,928.5Z M641.8,729.4 641.5,732.4 640.7,735.0 641.0,732.4Z M653.8,764.2 655.8,766.5 654.1,765.4Z M658.0,771.0 659.8,773.3 658.3,772.8Z M677.1,772.8 679.4,774.2 680.8,776.7 678.5,775.6 676.5,773.9Z M683.5,775.6 685.1,776.5 683.6,777.3Z M698.0,787.9 701.3,787.9 700.4,788.7 698.0,788.7Z M759.3,783.6 760.7,785.3 760.2,787.9 758.9,786.2Z M762.7,770.2 765.0,771.3 763.6,771.6Z M762.7,772.8 766.4,773.3 764.7,773.6Z M747.9,800.6 750.8,800.8 749.9,802.0 747.6,801.7Z M765.6,807.5 766.7,808.4 765.9,809.3 765.0,808.4Z M765.9,876.7 768.7,877.2 770.1,877.7 767.0,878.3Z M813.2,840.7 812.8,844.2 812.4,842.6Z M742.1,688.9 740.4,691.3 741.0,690.0Z M736.6,666.8 738.3,667.0 737.4,667.8 736.3,667.6Z M1000.2,488.3 992.8,484.3 978.9,482.4 973.2,481.6 968.4,478.6 961.8,477.7 956.2,473.5 949.9,478.2 946.1,480.1 940.9,482.6 937.5,487.4 928.6,494.4 926.8,498.6 933.2,503.3 935.5,507.7 938.8,509.4 935.9,511.9 928.9,514.1 923.1,518.6 928.0,520.9 930.8,526.0 938.2,527.1 942.8,524.4 943.9,530.1 940.4,532.6 935.9,535.4 932.3,538.5 930.3,542.7 928.8,544.7 931.4,550.4 934.5,553.6 940.5,555.0 941.6,558.6 940.1,561.1 945.1,558.9 950.5,559.2 954.6,560.7 953.6,563.5 950.0,570.2 944.6,575.1 938.8,578.6 936.5,580.8 933.1,581.6 932.5,583.0 936.8,582.1 939.6,579.8 946.2,577.1 950.7,573.5 956.7,568.1 959.3,566.2 965.4,560.0 963.5,557.5 964.5,555.8 967.2,552.7 971.4,547.4 974.6,546.6 970.7,549.5 971.0,550.4 969.4,554.8 969.2,558.1 971.9,558.1 976.1,554.4 979.0,553.9 978.4,549.1 985.0,547.2 986.7,550.4 988.9,551.9 992.0,553.7 999.1,553.9 1003.8,556.1 1007.3,558.3 1008.9,560.3 1012.6,563.5 1013.3,565.7 1016.3,569.7 1018.3,574.3 1021.3,578.6 1023.8,581.8 1030.5,583.5 1031.5,587.4 1036.1,593.1 1038.1,597.7 1036.0,600.0 1037.5,603.0 1041.2,605.2 1043.2,607.2 1045.3,608.7 1046.5,610.5 1046.7,612.6 1048.2,616.6 1048.4,619.5 1048.7,622.5 1048.4,626.0 1047.6,631.1 1047.0,633.1 1048.0,637.3 1047.5,642.3 1049.2,645.9 1049.4,647.7 1051.4,651.2 1052.9,652.0 1054.1,654.9 1054.6,656.2 1054.6,657.3 1057.5,660.5 1058.6,663.7 1060.8,663.9 1062.5,664.9 1064.2,665.3 1064.7,666.2 1066.5,667.1 1067.9,669.7 1069.6,672.5 1071.5,677.4 1072.2,679.7 1075.5,682.3 1076.7,685.2 1074.0,685.7 1078.2,689.3 1081.9,691.4 1082.3,694.7 1083.6,696.9 1087.7,699.6 1088.6,701.3 1090.0,700.8 1087.6,697.4 1086.6,695.3 1084.6,691.6 1082.9,688.7 1082.0,687.3 1080.6,685.2 1078.3,682.1 1075.9,679.3 1074.7,675.4 1074.9,672.9 1078.3,674.4 1080.2,677.4 1080.6,679.0 1082.9,682.4 1085.7,685.3 1088.6,688.4 1090.4,690.5 1091.1,692.8 1094.2,696.0 1098.6,700.3 1100.6,702.8 1101.8,705.4 1101.9,708.1 1100.6,708.9 1103.1,712.2 1104.6,713.0 1110.6,716.1 1112.4,717.2 1117.1,719.6 1123.1,722.1 1126.8,723.1 1130.5,721.6 1133.9,722.1 1137.5,725.0 1138.9,726.4 1142.5,728.2 1145.7,729.1 1149.7,730.3 1151.3,730.5 1152.0,731.2 1153.3,732.4 1157.0,736.0 1157.2,737.0 1157.1,738.6 1159.1,740.8 1159.9,739.8 1161.9,741.3 1163.2,743.5 1164.4,744.2 1165.5,745.2 1167.5,744.8 1169.2,746.1 1171.2,747.6 1173.7,746.9 1172.5,744.8 1175.0,742.6 1178.3,744.2 1179.0,746.8 1179.7,747.7 1181.1,750.5 1180.9,752.5 1181.4,756.8 1182.1,757.2 1178.6,760.8 1177.3,763.1 1176.6,765.1 1174.7,765.5 1173.5,768.1 1171.7,770.9 1171.0,774.5 1172.9,775.9 1173.2,777.6 1172.3,778.2 1170.2,780.3 1170.0,781.6 1170.6,782.7 1170.6,784.9 1171.8,785.9 1173.9,787.7 1176.4,791.3 1177.7,794.1 1179.0,797.1 1180.6,800.0 1181.9,802.7 1183.7,805.5 1184.3,808.0 1185.4,810.3 1187.5,812.5 1191.7,815.1 1196.2,817.3 1198.3,819.2 1201.3,821.7 1201.8,826.9 1201.6,832.7 1200.8,835.8 1201.1,837.5 1200.8,842.9 1199.8,848.2 1198.6,852.7 1198.3,857.6 1197.5,858.7 1197.9,864.0 1197.6,867.8 1197.6,869.8 1195.9,874.6 1193.3,880.6 1191.8,882.3 1192.4,887.8 1192.5,892.0 1191.4,898.5 1190.7,899.3 1190.0,905.5 1189.4,911.8 1186.3,919.2 1188.5,923.4 1186.3,928.5 1186.8,935.1 1187.8,942.0 1188.8,945.0 1192.8,950.9 1199.3,955.8 1206.5,959.3 1210.0,961.2 1212.1,956.6 1216.0,954.6 1208.7,950.4 1206.2,945.0 1206.9,943.5 1205.1,940.1 1206.7,933.4 1208.7,929.8 1213.9,923.2 1214.3,920.9 1209.2,917.8 1209.4,915.4 1212.1,912.2 1214.4,911.0 1215.7,909.0 1216.3,905.1 1216.3,903.0 1216.4,898.5 1216.6,895.3 1236.3,892.5 1236.3,736.7 1216.4,739.3 1213.3,737.9 1210.9,737.9 1207.9,738.2 1206.7,736.3 1204.2,735.6 1202.2,733.2 1201.6,734.7 1198.5,736.7 1197.5,736.7 1198.3,734.3 1197.4,732.5 1196.1,733.2 1193.9,735.1 1190.2,736.0 1188.4,736.7 1186.4,738.5 1186.0,741.3 1184.0,742.8 1183.0,745.4 1181.3,743.5 1176.7,740.9 1174.0,741.5 1170.3,743.1 1168.8,742.5 1167.3,741.5 1165.1,739.6 1163.2,736.9 1163.1,733.8 1163.6,730.9 1164.1,728.0 1164.8,725.0 1161.5,722.5 1159.5,722.2 1156.8,722.4 1154.4,722.7 1151.1,722.5 1149.3,723.0 1148.7,721.8 1150.4,717.6 1150.1,714.6 1151.4,715.2 1152.6,711.3 1152.6,709.5 1154.5,706.6 1153.5,705.4 1151.0,705.6 1146.3,706.2 1144.3,707.1 1143.7,710.6 1142.5,712.8 1140.0,714.2 1136.8,714.8 1132.6,715.7 1130.2,714.0 1127.9,712.5 1124.5,708.6 1124.4,707.2 1123.1,703.3 1123.3,698.6 1123.8,694.7 1125.0,691.7 1124.8,686.5 1127.1,683.9 1131.6,681.0 1134.3,679.7 1136.5,679.5 1138.8,680.2 1141.0,680.2 1143.6,681.6 1145.0,681.5 1147.7,681.9 1146.7,680.0 1146.4,678.2 1148.4,677.5 1150.8,677.9 1153.3,677.5 1155.3,677.4 1157.5,678.2 1158.5,679.8 1161.2,679.0 1162.1,678.5 1165.1,681.5 1165.8,684.5 1165.9,686.0 1167.3,689.5 1168.9,692.0 1170.6,694.2 1172.6,694.1 1173.4,692.3 1173.7,689.3 1172.9,686.8 1172.2,683.7 1170.9,681.3 1169.8,677.5 1169.8,674.9 1171.3,671.9 1174.0,669.5 1176.0,667.5 1179.4,665.8 1183.6,663.2 1186.5,660.9 1186.1,658.3 1185.1,655.1 1185.3,654.2 1187.3,651.2 1187.7,648.3 1188.2,647.8 1189.6,646.3 1190.8,642.2 1192.2,641.6 1195.2,640.7 1196.9,639.9 1197.9,638.8 1199.2,638.2 1200.3,638.0 1202.3,637.6 1201.6,636.1 1200.8,637.1 1199.3,635.0 1200.5,633.8 1200.2,632.1 1201.5,629.9 1203.6,629.1 1204.9,628.2 1207.3,627.0 1210.9,625.4 1213.4,623.5 1216.6,622.1 1236.3,622.1 1236.3,606.8 1216.4,606.8 1213.6,607.4 1209.3,608.5 1206.5,610.2 1203.5,612.8 1200.8,616.4 1198.8,617.1 1201.1,614.5 1203.0,611.6 1204.9,608.9 1207.3,607.0 1209.6,606.6 1212.4,602.6 1216.4,602.2 1236.3,602.2 1236.3,551.3 1217.0,551.3 1215.8,554.1 1214.4,559.2 1213.6,560.8 1210.7,561.9 1207.3,561.6 1203.3,557.5 1202.2,553.6 1203.3,547.5 1196.6,544.2 1186.1,540.0 1180.9,538.3 1179.7,539.1 1178.9,549.0 1181.4,553.3 1179.1,562.2 1182.8,569.9 1180.1,578.7 1174.5,581.9 1176.6,586.0 1177.2,589.8 1178.0,593.3 1176.9,596.7 1172.6,597.4 1170.9,593.5 1167.5,589.8 1167.2,585.0 1167.2,579.3 1159.2,578.6 1152.1,575.1 1148.1,570.7 1138.8,569.7 1136.2,560.4 1133.5,560.4 1131.6,553.6 1133.8,547.2 1137.9,540.6 1139.3,536.9 1143.3,533.5 1149.6,531.2 1148.9,529.4 1151.6,526.0 1153.8,521.3 1156.0,512.3 1159.0,514.4 1163.8,511.6 1169.5,505.0 1170.2,495.2 1168.6,490.3 1165.2,486.6 1158.1,487.8 1156.7,497.4 1153.8,506.5 1152.4,509.1 1150.1,504.3 1145.9,496.6 1148.1,491.9 1141.0,487.8 1139.9,480.3 1137.1,473.3 1132.6,467.9 1128.5,473.3 1126.5,480.3 1127.4,486.2 1128.8,489.5 1132.5,493.5 1128.2,498.2 1128.8,505.0 1124.0,501.3 1121.1,499.3 1116.9,502.0 1109.7,503.5 1104.1,499.7 1096.9,497.4 1092.7,502.8 1094.1,509.8 1088.4,504.3 1081.3,503.1 1073.9,502.6 1077.3,498.2 1071.3,494.3 1062.8,491.1 1050.0,489.5 1046.6,483.7 1044.3,487.0 1044.3,490.3 1040.1,485.4 1037.4,480.5 1034.4,485.4 1032.9,487.8 1030.1,484.1 1022.9,489.9 1015.9,493.5 1013.0,495.1 1008.8,491.1 1005.6,488.7 1002.5,488.7Z M1214.7,630.9 1213.1,629.3 1212.7,627.4 1214.4,625.8 1216.7,624.2 1230.6,624.2 1230.6,630.5 1216.4,630.5Z M1190.8,641.6 1191.9,640.5 1194.8,640.1 1195.6,639.6 1196.9,639.9 1195.2,640.7 1192.2,641.6Z M1236.3,328.4 1226.4,336.7 1220.7,350.2 1212.1,361.0 1209.9,369.5 1216.4,376.0 1215.0,383.8 1206.5,388.3 1197.9,392.6 1194.2,396.9 1196.5,402.4 1199.3,407.8 1205.0,407.8 1199.9,411.7 1198.8,415.5 1203.6,420.4 1207.9,425.2 1212.1,427.6 1219.3,426.4 1236.3,432.2Z M1051.4,476.0 1058.8,472.0 1062.2,465.1 1066.8,459.4 1073.3,453.5 1067.1,448.4 1061.4,445.8 1055.7,445.3 1047.7,444.2 1047.2,452.5 1045.7,461.3 1043.5,468.3 1047.2,471.5Z M1062.8,471.5 1064.2,461.3 1075.6,455.0 1084.1,458.4 1088.4,459.9 1093.2,455.5 1096.9,451.5 1101.8,458.4 1093.5,464.2 1095.5,468.8 1102.6,467.9 1104.1,475.1 1114.0,481.2 1113.2,489.5 1109.7,493.5 1101.2,494.7 1091.3,497.4 1079.9,497.0 1074.2,491.9 1069.1,489.5 1067.6,484.5 1077.0,482.0 1081.3,481.2 1074.2,479.9 1066.2,479.0 1064.2,474.7 1071.3,473.8 1066.2,472.4Z M1118.3,473.8 1109.7,467.9 1109.2,460.4 1112.6,453.5 1116.0,448.4 1122.5,449.9 1125.4,456.5 1126.8,462.3 1124.5,468.8 1121.7,473.3Z M1133.1,467.4 1129.4,461.3 1129.1,453.5 1132.5,446.8 1139.6,447.4 1144.7,451.5 1144.4,460.4 1139.6,465.1Z M1124.0,497.4 1118.6,493.5 1120.3,488.7 1124.0,486.2 1129.7,489.1 1130.2,494.3 1128.2,497.0Z M1139.6,442.6 1149.6,442.1 1162.4,443.7 1172.9,441.0 1174.9,433.3 1172.3,428.1 1165.2,429.3 1156.7,423.4 1146.7,421.0 1141.0,422.8 1135.3,415.5 1128.2,414.2 1126.0,420.4 1133.9,425.2 1136.8,432.2 1138.2,437.8Z M1132.5,441.6 1126.8,437.8 1128.8,431.6 1133.9,431.0 1135.6,436.7Z M1122.5,437.2 1115.4,437.8 1109.7,431.0 1105.5,422.8 1112.6,418.0 1119.7,418.6 1123.4,426.4 1122.5,432.2Z M1079.9,443.7 1068.5,438.3 1067.1,431.0 1071.3,426.4 1068.5,423.4 1071.3,416.7 1079.9,419.2 1082.7,424.0 1089.8,417.3 1094.1,422.8 1100.4,426.4 1100.6,434.4 1095.5,438.3 1088.4,437.8 1086.1,442.6Z M1061.4,428.1 1052.9,422.8 1052.0,415.5 1060.0,407.8 1069.9,405.8 1072.8,412.9 1067.1,420.4 1063.4,425.2Z M1065.7,431.6 1062.0,427.6 1066.2,426.4 1067.9,429.3Z M1081.3,409.7 1075.6,404.4 1079.9,399.7 1087.0,400.4 1088.4,406.4Z M1085.6,397.6 1078.5,394.1 1082.7,389.0 1089.0,391.2 1089.0,396.2Z M1075.3,404.4 1074.2,401.7 1077.6,401.7Z M1101.2,412.3 1100.1,407.8 1103.5,405.1 1104.6,410.4Z M1114.0,403.1 1106.9,399.7 1101.2,389.7 1106.9,380.7 1116.9,385.3 1119.7,394.1 1118.3,401.1Z M1126.8,402.4 1121.7,396.9 1124.0,389.0 1129.7,390.5 1131.1,398.3Z M1119.7,375.2 1116.9,369.5 1120.3,367.8 1121.7,373.6Z M1132.5,408.4 1127.7,405.1 1132.5,403.1 1135.3,406.4Z M1145.3,411.0 1141.0,408.4 1144.7,406.4 1147.3,409.1Z M1139.6,399.0 1133.9,392.6 1131.1,383.8 1128.2,375.2 1127.4,366.2 1131.1,359.3 1129.7,353.9 1136.8,346.5 1142.5,352.1 1148.1,361.0 1153.8,371.2 1156.7,380.7 1152.4,389.7 1149.6,395.5 1143.9,398.3Z M1170.9,424.0 1165.2,421.6 1160.1,422.8 1147.3,421.0 1145.9,416.1 1151.0,411.7 1151.8,407.8 1159.5,405.1 1152.4,401.1 1155.3,394.8 1159.5,388.3 1159.0,380.7 1156.7,371.2 1151.0,361.0 1143.9,353.9 1142.5,346.5 1151.0,336.7 1162.4,328.4 1173.7,321.9 1185.1,315.1 1202.2,310.5 1216.4,314.0 1224.1,324.1 1227.8,334.6 1217.8,340.7 1215.0,350.2 1209.3,357.5 1202.2,366.2 1197.9,374.4 1190.8,379.1 1186.5,384.5 1189.4,391.2 1187.4,396.9 1183.7,402.4 1179.4,406.4 1173.7,410.4 1178.0,414.2 1179.4,419.2 1175.2,422.8Z M1215.0,542.4 1209.3,539.4 1202.6,536.6 1195.1,532.5 1183.6,527.8 1179.4,526.7 1178.6,523.4 1180.9,519.6 1188.0,520.7 1191.4,516.5 1194.2,511.6 1193.7,505.0 1189.4,499.0 1185.1,494.3 1180.9,487.8 1177.2,483.7 1174.3,487.0 1168.1,485.8 1159.5,485.4 1152.4,481.6 1148.1,476.8 1145.9,467.9 1146.2,456.5 1149.6,449.9 1156.7,451.0 1158.1,455.5 1156.7,462.3 1158.1,473.3 1160.9,465.1 1161.8,457.4 1162.4,451.5 1168.1,451.0 1170.9,451.5 1171.8,456.5 1173.7,451.0 1180.9,450.5 1184.3,453.5 1185.0,459.9 1188.5,465.1 1196.5,472.0 1200.8,476.8 1206.2,481.4 1209.3,488.7 1211.6,492.7 1209.3,496.6 1211.6,498.2 1216.4,501.3 1236.3,501.3 1236.3,522.7 1216.4,522.7 1213.0,518.6 1213.6,514.8 1209.9,511.6 1208.4,515.8 1209.9,520.0 1214.1,524.0 1216.4,526.7 1217.0,529.3 1217.5,533.8 1216.4,536.3 1212.1,534.4 1206.4,530.9 1206.7,533.1 1209.9,536.3 1213.6,540.0Z M1158.1,535.0 1153.3,530.6 1155.3,526.0 1156.7,520.7 1158.7,516.5 1162.4,517.2 1165.8,520.7 1170.9,526.0 1173.2,529.9 1169.5,533.1 1163.8,531.2 1162.4,534.4Z M1168.1,541.2 1163.8,538.2 1166.6,536.0 1169.2,537.5Z M1175.2,544.2 1172.9,541.2 1174.0,539.1 1175.7,541.8Z M1185.1,506.5 1181.4,503.5 1183.7,499.7 1187.4,502.0Z M1168.3,590.5 1170.0,588.8 1172.9,589.8 1170.9,590.9Z M1174.3,575.6 1175.2,572.5 1176.6,573.5 1175.7,576.1Z M928.6,551.6 930.0,553.0 928.6,554.7 925.4,553.6Z M912.9,531.2 917.7,533.1 920.9,535.0 916.9,534.1 912.6,533.5Z M967.5,563.0 968.4,565.7 966.1,568.9 963.3,571.0 961.3,567.8 964.7,564.9Z M934.8,580.3 936.8,581.3 933.4,582.8 932.3,581.8Z M927.7,585.2 926.6,587.4 924.3,588.3 925.7,586.9Z M923.4,587.4 921.2,589.8 920.6,590.2 922.3,588.3Z M905.8,593.1 904.9,594.0 903.0,594.4Z M869.4,590.0 870.8,590.7 868.5,590.5Z M849.5,578.6 851.2,581.6 849.8,580.6Z M1023.0,584.0 1026.4,585.5 1026.4,588.8 1028.4,593.5 1028.1,594.4 1024.4,589.8 1022.7,586.9Z M1159.7,704.5 1161.2,702.8 1165.2,700.9 1167.1,700.5 1169.5,700.6 1170.5,700.3 1174.3,701.9 1178.6,703.4 1181.7,705.3 1184.8,706.8 1188.0,708.0 1190.4,709.4 1188.0,710.4 1185.5,710.3 1180.3,710.6 1181.9,709.1 1179.4,708.0 1174.0,705.3 1172.5,703.9 1170.3,703.7 1168.3,702.5 1167.2,701.9 1163.5,703.4Z M1165.5,704.3 1166.3,705.3 1165.5,705.7 1164.9,704.9Z M1192.5,710.7 1195.9,710.9 1197.5,710.4 1200.2,710.7 1204.2,712.2 1205.6,713.1 1206.9,714.3 1206.0,715.5 1202.5,714.8 1200.5,715.5 1198.1,717.3 1197.2,716.0 1194.9,715.5 1191.5,715.5 1189.5,715.1 1189.7,714.2 1194.5,714.8 1195.5,714.5 1194.4,712.8 1194.5,711.8 1193.1,711.2Z M1178.4,714.6 1179.7,714.7 1182.6,714.9 1183.8,715.6 1184.6,716.4 1182.8,716.3 1181.9,717.0 1180.1,716.5 1178.9,715.5Z M1210.3,714.6 1214.7,714.8 1214.1,716.1 1210.2,716.3Z M1178.9,694.2 1180.1,695.7 1180.6,697.5 1179.4,696.9Z M1176.9,689.3 1179.7,689.7 1177.7,690.0Z M1180.6,688.7 1182.3,690.6 1181.7,691.9 1181.4,690.3Z M1141.3,768.8 1142.5,769.9 1141.9,771.0 1141.0,770.5Z M1190.7,899.3 1192.2,899.7 1191.9,902.4 1191.7,905.5 1190.0,905.5Z M1206.2,945.0 1201.1,948.1 1199.6,951.4 1202.2,953.4 1207.0,955.8 1212.1,956.6 1216.0,954.6 1208.7,950.4Z M326.7,1068.0 373.2,1049.5 400.0,1050.0 419.7,1046.3 446.7,1053.2 461.4,1042.6 485.8,1037.7 510.3,1027.9 525.0,1019.4 544.6,1025.5 552.0,1030.4 576.4,1034.0 578.9,1040.2 593.5,1048.7 600.9,1036.5 608.2,1029.2 610.7,1020.6 616.8,1024.3 622.9,1019.4 647.4,1020.6 652.3,1013.3 662.0,1016.9 667.0,1013.7 676.8,1020.6 689.0,1025.5 698.8,1019.4 711.0,1026.7 730.6,1024.3 742.9,1026.7 747.8,1020.6 759.8,1020.6 761.0,1016.4 762.2,1021.8 776.9,1026.7 792.8,1027.9 794.0,1032.8 806.3,1040.2 816.0,1039.0 823.4,1045.0 835.7,1054.9 847.9,1058.5 860.2,1063.4 862.6,1068.0 862.6,1075.0 326.7,1075.0Z M1217.0,1019.0 1214.0,1022.0 1212.0,1030.0 1210.0,1037.0 1205.0,1043.0 1196.0,1046.0 1186.0,1050.0 1190.0,1054.0 1180.0,1060.0 1175.0,1069.0 1217.0,1069.0Z M285.0,301.0 292.0,302.0 298.0,303.0 303.0,304.0 308.0,310.0 313.0,319.0 309.0,325.0 311.0,329.0 305.0,334.0 307.0,338.0 314.0,336.0 322.0,337.0 332.0,338.0 340.0,339.0 344.0,343.0 342.0,349.0 338.0,353.0 334.0,352.0 330.0,361.0 325.0,363.0 321.0,370.0 323.0,378.0 322.0,388.0 319.0,394.0 317.5,401.0 321.0,406.0 325.0,414.0 322.0,422.0 321.0,432.0 325.0,437.0 321.0,445.0 317.0,452.0 316.4,459.0 314.0,466.0 314.0,474.0 312.0,480.0 310.0,485.5 304.0,490.0 298.0,494.0 292.0,499.0 285.0,500.0Z" fill="#16181d" stroke="#16181d" stroke-width="0.6" stroke-linejoin="round" filter="url(#rough)"/>
<path d="M517.2,619.3 522.4,616.4 526.6,617.2 528.6,619.7 528.1,623.3 523.5,624.6 520.2,626.2 522.8,629.9 525.5,633.2 526.6,636.3 527.8,640.1 528.1,643.9 529.8,645.7 530.3,649.4 530.6,653.3 530.6,655.3 526.6,656.2 523.5,655.8 518.1,653.2 516.3,649.6 517.4,646.5 519.1,642.6 520.7,642.6 518.7,641.6 516.1,637.5 514.7,636.1 512.4,632.5 512.3,628.9 510.7,625.8 512.7,622.9 515.5,620.9Z M460.1,639.3 456.9,636.7 455.5,634.4 456.8,631.7 458.4,630.9 458.8,627.9 461.5,625.2 461.9,623.8 463.2,621.3 463.9,620.3 464.8,618.4 467.2,618.0 468.3,620.1 471.2,619.9 473.0,620.1 471.2,621.5 469.7,623.1 472.2,623.8 472.6,626.2 473.2,627.0 474.4,626.6 476.9,625.4 478.0,624.4 480.3,624.6 481.0,624.2 481.8,624.2 483.4,625.0 484.8,625.8 488.4,628.2 490.2,630.1 493.9,632.5 495.8,635.8 495.6,637.7 492.5,639.9 490.2,640.1 485.1,640.1 480.7,639.0 479.6,637.5 477.3,636.2 473.3,636.4 469.5,637.3 467.8,638.4 465.8,639.7 463.2,639.6 461.5,639.4Z M481.4,623.1 479.1,622.7 476.4,620.1 477.7,619.3 482.0,617.4 484.0,616.2 487.9,615.5 489.1,616.0 486.1,617.6 485.8,620.3 483.7,623.3 482.3,623.1Z M459.5,640.3 456.9,640.1 454.7,641.4 455.8,642.4 459.2,642.4 461.5,641.1Z M465.6,553.9 464.1,549.5 462.9,547.2 464.6,543.6 466.9,544.5 469.7,547.2 470.9,549.5 470.0,552.4 467.5,553.6Z M478.6,548.4 476.6,544.8 475.1,543.0 476.3,538.8 476.6,536.3 478.6,540.0 480.8,543.0 480.8,546.6Z M672.3,595.8 675.1,594.9 678.8,591.7 681.7,588.3 684.5,585.0 686.8,581.1 688.9,576.3 690.0,576.6 689.9,580.1 688.8,583.5 687.3,587.4 684.2,590.7 681.4,593.1 678.5,594.9 675.1,596.5 673.1,597.0Z M587.9,624.8 586.4,622.1 586.7,618.9 588.6,617.0 590.6,618.4 593.5,618.0 596.3,617.4 599.2,617.6 602.6,618.2 602.3,619.3 599.2,618.9 596.3,618.6 593.5,619.3 590.6,620.1 589.2,622.1Z M596.3,633.4 599.7,633.6 598.9,635.2 595.5,635.6 594.3,634.4Z M544.0,622.1 545.4,623.8 544.3,627.4 543.1,628.2 543.1,624.6Z M550.2,616.8 552.5,617.6 550.8,619.7 548.5,618.9Z M467.8,768.8 470.0,767.3 472.0,767.1 474.0,767.9 476.3,769.1 474.3,770.8 473.4,773.3 471.2,775.3 468.3,775.9 467.5,773.9 467.6,771.0Z M460.2,777.7 461.1,777.9 461.9,782.2 462.3,785.3 464.6,788.2 466.0,792.5 465.5,793.3 464.1,791.6 462.6,788.2 460.6,785.3 460.4,782.4 460.2,780.2Z M473.7,795.3 474.6,795.6 476.3,799.7 476.4,802.6 476.4,805.5 476.7,807.5 477.7,809.6 476.6,809.3 474.9,807.0 474.2,802.6 474.6,799.7 474.0,796.8Z M479.7,755.1 480.6,755.7 480.6,759.7 481.4,761.4 480.6,761.1 479.4,758.2Z M466.6,761.7 466.9,762.8 464.3,765.1 463.8,765.4 464.9,763.4Z M1160.7,618.4 1159.8,612.6 1155.8,609.2 1151.3,608.1 1147.6,610.5 1144.4,613.2 1139.3,617.2 1142.5,617.6 1144.2,618.0 1147.3,616.8 1151.3,614.5 1149.9,616.8 1152.7,618.2 1154.8,618.9 1158.1,617.6 1159.7,617.3Z M1160.2,621.3 1158.1,620.9 1155.0,621.5 1153.7,621.5 1152.1,624.6 1151.0,626.4 1154.0,623.6 1152.1,628.2 1151.3,632.3 1152.1,636.7 1153.0,637.7 1154.3,637.3 1155.3,635.9 1156.0,632.5 1155.4,628.7 1156.4,625.6 1158.0,623.8 1157.8,625.6 1158.8,623.1 1159.5,621.9Z M1160.4,621.3 1162.4,620.5 1163.8,619.3 1166.6,619.7 1169.5,620.7 1173.6,623.1 1174.2,625.6 1173.2,626.6 1171.0,626.2 1169.1,623.6 1170.0,625.8 1168.9,629.5 1166.9,632.5 1166.3,629.9 1165.4,628.3 1162.8,629.9 1163.8,627.6 1163.9,624.4 1162.9,622.9 1161.1,621.9Z M1163.9,637.5 1166.1,638.2 1168.9,638.2 1171.5,636.7 1173.5,635.8 1175.7,634.4 1176.9,632.9 1174.9,633.1 1173.2,634.2 1170.9,633.8 1168.3,635.4 1166.6,636.5 1164.9,636.1Z M1174.3,631.5 1175.5,629.9 1179.4,628.7 1182.3,628.9 1183.7,627.8 1184.7,628.7 1183.7,630.7 1180.6,631.5 1177.4,631.1 1176.4,631.5Z M1050.0,521.7 1046.3,518.6 1051.4,515.1 1045.7,511.6 1050.0,509.4 1055.7,512.3 1060.0,508.0 1065.7,509.4 1064.2,513.0 1066.8,514.4 1064.8,517.9 1060.0,516.5 1058.5,522.7 1055.7,523.0 1054.8,519.3 1052.3,520.7Z M1067.9,547.2 1069.1,544.8 1072.8,540.0 1075.9,539.1 1078.5,541.8 1082.7,539.4 1087.0,536.3 1091.3,536.9 1089.8,538.5 1085.6,540.0 1082.2,542.4 1079.9,546.0 1075.6,548.7 1072.2,548.7 1069.4,548.1Z M1085.0,561.1 1088.4,558.6 1092.1,556.7 1096.9,556.1 1102.1,557.5 1099.8,558.6 1094.1,558.9 1089.8,560.3 1086.7,561.6Z M1125.8,601.7 1126.8,598.1 1125.4,594.4 1125.4,593.1 1124.5,589.8 1122.5,586.0 1120.0,585.7 1119.1,588.8 1121.7,592.1 1124.5,594.9 1125.5,596.7 1125.4,599.5 1125.4,601.3Z M1122.0,602.2 1120.8,599.0 1118.3,595.4 1116.0,590.7 1116.9,589.8 1118.8,594.4 1121.4,598.1 1122.5,601.3Z M1108.6,573.0 1111.2,568.9 1112.3,564.1 1109.5,565.7 1108.3,569.9Z M1197.9,515.1 1198.5,509.4 1203.6,509.8 1203.3,513.7Z M1197.6,524.4 1198.5,521.0 1201.6,522.0 1200.2,524.7Z M1149.3,602.2 1151.0,603.9 1150.1,606.1 1148.1,604.4Z M963.5,554.7 958.1,555.8 959.0,557.5 962.7,556.4Z M1157.0,733.5 1159.5,734.1 1160.1,736.4 1158.4,736.6 1157.0,735.3Z M1202.3,812.2 1204.2,813.0 1205.9,814.9 1205.3,815.9 1203.6,814.9 1202.0,813.7Z M1197.6,737.7 1199.1,740.2 1198.5,742.2 1196.8,742.4 1195.9,740.2 1196.8,738.5Z M415.7,557.5 412.6,559.7 412.9,562.5 416.0,561.4 417.1,559.2Z M419.7,561.1 418.8,563.0 417.5,566.0 418.1,563.0Z M456.1,559.2 454.4,561.4 455.8,564.6 456.4,562.5Z M661.7,445.3 667.4,441.0 676.0,441.6 673.1,444.2 666.0,444.2Z M754.2,623.3 755.0,625.0 753.9,626.4 753.1,624.6Z M661.7,654.1 664.0,654.8 663.2,656.2 660.6,655.7Z M506.2,650.5 506.4,654.1 507.6,654.8 507.9,651.5Z M500.7,647.7 501.3,649.0 499.3,650.1 497.6,649.4Z M672.1,730.0 673.7,730.9 674.5,732.4 673.1,731.8Z M1053.1,650.8 1053.4,651.9 1054.3,653.2 1053.0,651.9Z M1184.8,646.1 1184.3,649.4 1184.8,653.0 1184.7,654.8 1185.1,654.4 1185.1,651.2 1184.6,647.6Z M1185.5,658.7 1184.0,660.4 1183.4,661.8 1185.1,661.3 1186.1,660.1Z M1046.9,610.5 1051.4,611.3 1052.9,615.1 1053.4,612.2 1051.4,608.3 1050.6,606.6 1046.0,603.5 1046.3,605.2 1050.0,609.6Z M1216.4,606.8 1213.6,607.4 1209.3,608.5 1206.5,610.2 1203.5,612.8 1200.8,616.4 1198.8,617.1 1201.1,614.5 1203.0,611.6 1204.9,608.9 1207.3,607.0 1209.6,606.6 1212.4,602.6 1216.4,602.2 1236.3,602.2 1236.3,606.8Z" fill="#26445f"/>
<path d="M1076.9,607.9 1060.0,586.9 1060.0,553.6 M1000.2,553.6 1131.6,553.6 M1049.2,553.6 1033.8,539.4 1024.1,524.0 1013.9,508.7 1013.2,494.3 M1088.4,553.6 1088.4,607.9 M1111.2,553.6 1112.9,607.9 M1111.2,553.6 1111.2,528.0 1058.0,508.7 1058.0,489.5 M1131.6,553.6 1148.1,570.4 1130.7,590.5 1130.7,607.9 M1175.2,596.7 1175.2,614.1 1176.6,619.3 1186.0,622.5 1188.8,624.6 M1048.0,636.3 1085.4,636.3 1085.4,624.6 1105.3,624.6 1105.3,607.9 M1048.6,619.5 1056.6,622.1 1062.8,620.5 1068.8,620.5 1068.5,607.9 M1060.0,636.3 1060.0,647.6 1075.2,661.8 1075.0,669.6 M1068.5,636.3 1068.8,620.5 M1067.9,626.6 1085.4,626.6 M1085.4,640.1 1111.0,640.1 1105.3,624.6 M1076.9,654.8 1132.2,654.8 M1076.9,636.3 1076.9,654.8 M1091.1,640.1 1091.1,674.3 M1108.3,654.8 1108.3,672.0 1098.1,672.0 M1111.0,643.9 1130.2,643.9 M1105.3,632.5 1126.8,632.5 1130.2,643.9 1132.2,656.5 1132.6,666.6 1133.8,668.7 1134.3,679.7 M1108.3,656.5 1116.9,656.5 1116.9,663.4 1126.8,665.6 1132.6,666.6 M1105.3,620.5 1126.7,620.7 1124.8,607.9 M1126.7,620.7 1127.0,630.5 M1127.0,630.5 1141.9,630.5 1143.5,634.4 1141.3,642.4 1145.0,647.9 1147.7,654.8 1146.7,656.5 1132.2,656.5 M1139.3,617.2 1141.9,630.5 M1143.5,634.4 1151.6,634.4 M1152.1,647.2 1151.0,651.9 1147.7,654.8 M1152.4,637.3 1152.1,647.2 M1160.1,637.5 1160.1,647.2 1156.7,651.2 1151.0,651.9 M1152.4,637.3 1163.9,637.5 M1160.1,647.2 1166.3,649.7 1168.1,653.0 1163.2,656.2 1146.7,656.5 M1163.2,656.2 1185.4,656.4 M1144.4,661.8 1157.8,661.8 1164.9,661.8 1167.2,662.5 1170.9,661.1 1174.6,662.5 1177.9,665.8 M1150.4,661.8 1149.9,677.9 M1157.8,661.8 1159.5,671.0 1159.5,675.4 1152.1,675.4 1152.4,677.5 M1159.5,675.4 1159.8,676.4 1167.5,676.7 1169.5,676.4 M1164.9,661.8 1165.2,663.5 1169.5,668.7 1171.2,671.9 M1133.8,668.7 1142.0,668.7 M1146.2,658.3 1144.4,661.8 1142.0,668.7 1140.7,675.4 1146.0,675.4 1146.7,678.0 M1172.3,645.0 1185.7,645.0 1186.0,649.6 1187.8,649.6 M1174.5,636.3 1187.0,636.3 1188.8,638.8 1191.1,640.1 M1174.5,635.2 1174.5,636.3 M1172.3,645.0 1172.3,641.6 1172.3,635.2 M1172.3,641.6 1166.3,649.7 M1175.2,645.0 1180.3,646.8 1184.3,651.2 M1180.3,646.8 1172.9,653.7 1168.1,653.0 M1192.7,624.6 1192.9,633.4 1192.2,639.0 1191.8,640.1 M1197.9,624.6 1195.2,632.5 1195.2,633.6 1198.5,633.6 1199.9,632.9 M1199.3,623.3 1199.9,632.1 M1192.2,636.3 1197.1,636.3 1198.2,636.3 M744.2,844.8 778.4,844.8 778.4,854.5 801.1,854.5 813.9,851.9 M744.2,807.8 744.2,863.4 M769.8,844.8 769.8,815.8 M778.4,844.8 778.4,871.1 778.4,885.4 M778.4,871.1 782.6,871.8 789.7,878.1 795.4,878.4 798.8,880.9 803.9,883.4 M728.9,587.4 722.9,602.2 718.6,612.2 727.2,617.6 724.3,622.5 728.6,630.5 721.5,636.3 716.6,640.1 718.1,643.9 M727.2,617.6 735.7,619.3 740.0,624.6 744.2,626.6 749.9,628.5 M724.3,622.5 728.6,627.8 732.9,631.3 734.3,636.3 735.7,640.1 M661.7,634.0 661.7,643.9 656.1,647.6 647.5,647.6 641.8,648.6 636.1,656.5 631.9,658.3 621.9,656.5 604.9,658.3 600.6,660.1 M656.1,647.6 667.4,653.0 670.3,658.3 678.8,660.1 683.1,653.0 681.1,646.5 676.0,644.6 676.0,637.9 M670.3,658.3 667.4,664.2 674.5,668.7 678.8,670.0 685.9,668.0 691.0,663.2 691.9,659.7 693.3,646.5 694.5,643.1 M674.5,668.7 667.4,664.2 656.1,667.0 654.6,670.4 658.0,673.7 658.9,681.9 658.0,684.5 M636.1,656.5 634.7,667.0 654.6,670.4 M678.8,670.0 677.4,678.7 678.2,682.6 673.1,685.2 667.4,690.9 661.7,688.4 658.0,684.5 M678.2,682.6 685.9,681.9 690.2,678.0 688.8,672.0 685.9,668.0 M667.4,690.9 674.5,696.3 678.8,694.7 688.8,690.0 685.9,681.9 M678.8,694.7 677.4,700.9 M688.8,690.0 695.9,693.1 695.9,696.3 694.5,699.4 691.6,704.0 689.1,705.3 M695.9,693.1 703.0,695.3 709.8,697.8 710.7,699.1 M690.2,678.0 700.1,679.7 701.6,681.9 707.3,678.7 709.5,679.3 714.4,685.2 719.5,687.4 M700.1,679.7 701.3,691.6 703.0,695.3 M691.0,663.2 695.9,668.7 700.7,672.0 705.8,673.7 707.3,678.7 M705.8,673.7 708.7,665.3 712.9,663.5 716.4,661.8 M708.7,665.3 705.8,658.3 701.6,656.5 695.9,661.8 691.0,663.2 M705.8,658.3 712.1,651.2 M701.6,656.5 701.6,643.9 707.3,636.3 715.8,634.4 716.6,640.1 M714.4,673.7 717.2,677.7 720.9,675.4 M714.4,673.7 715.2,669.7 712.9,663.5 M709.5,679.3 714.4,673.7 M570.7,683.6 577.8,684.2 M579.5,665.3 577.3,672.7 576.4,678.7 576.4,683.6 M577.3,672.7 586.4,668.7 M579.3,696.9 586.4,699.4 587.8,704.0 584.4,707.1 M577.8,685.5 587.5,678.7 M592.9,696.3 599.2,689.0 590.6,688.7 582.7,686.1 M586.4,699.4 592.9,696.3 594.9,705.6 604.9,705.6 612.0,697.8 616.2,704.0 624.8,705.6 M594.9,705.6 587.2,710.1 M604.9,705.6 606.3,716.1 597.7,713.1 597.7,722.1 588.6,717.6 M606.3,716.1 611.4,715.2 618.5,713.1 M597.7,722.1 600.6,728.9 599.2,731.8 594.0,735.0 591.5,733.8 M600.6,728.9 605.4,729.4 M599.2,689.0 606.3,690.0 612.0,697.8 616.2,693.1 616.2,687.1 M616.2,693.1 627.0,696.3 626.2,704.0 M599.2,689.0 596.3,681.9 598.0,677.4 601.4,675.0 M596.3,681.9 586.1,679.0 M598.0,677.4 592.9,670.4 M606.3,468.8 603.4,476.8 612.0,493.5 613.4,505.0 617.7,519.3 619.1,535.7 617.7,544.8 619.1,553.6 627.6,564.6 631.9,569.9 629.6,575.1 631.3,580.1 629.9,587.4 628.2,594.4 627.6,599.0 627.0,607.0 M695.9,448.4 693.0,463.2 697.3,481.2 680.2,493.5 678.8,508.7 680.2,519.3 685.9,529.3 680.2,541.8 674.5,553.6 661.7,561.9 654.6,567.3 651.8,575.1 656.1,580.1 650.4,585.0 654.6,587.4 658.6,592.1 658.6,594.0 M685.9,529.3 690.2,541.8 690.2,550.7 697.3,559.2 704.4,564.6 711.5,565.7 720.1,569.9 725.7,572.5 732.9,576.1 748.5,576.6 751.3,569.9 754.2,564.6 761.3,556.4 771.3,550.7 776.9,543.6 781.2,541.8 791.2,538.8 794.0,532.5 788.3,526.0 792.6,519.3 806.8,515.8 816.8,508.7 828.1,501.3 836.7,497.4 839.0,488.3 M791.2,538.8 795.4,547.8 795.4,557.5 M828.1,501.3 829.6,515.8 833.8,526.0 831.0,535.7 842.4,538.8 852.3,532.5 866.5,538.8 875.1,541.8 M842.4,538.8 843.2,544.8 M748.5,576.6 754.2,587.4 751.3,594.4 754.2,601.3 749.1,607.9 M725.7,572.5 722.9,582.6 721.2,588.3 M760.7,610.5 767.0,614.3 770.4,617.2 M711.5,565.7 707.3,575.1 700.1,582.6 695.9,592.1 693.0,599.0 685.9,605.2 M711.5,565.7 701.6,572.5 691.6,575.1 685.9,582.6 681.7,589.8 670.3,594.4 663.2,596.7 658.6,594.0 M617.7,519.3 604.9,532.5 593.5,534.4 576.4,529.3 559.3,522.7 548.0,522.7 546.5,538.8 546.0,547.8 545.1,556.4 541.7,564.6 540.9,575.1 546.5,582.6 542.3,589.8 544.0,598.6 M565.0,499.0 557.9,512.3 559.3,522.7 M617.7,544.8 596.3,550.7 593.5,559.2 582.1,561.9 573.6,556.4 565.0,561.9 553.7,553.6 546.0,547.8 M631.9,569.9 617.7,572.5 604.9,569.9 593.5,569.9 590.6,561.9 M617.7,572.5 613.4,580.1 617.7,585.0 623.3,587.4 628.2,594.4 M613.4,580.1 599.2,586.0 592.1,583.5 590.6,577.6 593.5,569.9 M590.6,577.6 579.3,575.1 572.1,578.6 565.0,572.5 565.0,561.9 M565.0,572.5 553.7,580.1 546.5,582.6 M548.0,501.3 530.9,508.7 515.3,514.4 503.9,512.3 M515.3,514.4 512.4,532.5 511.0,544.8 516.7,550.7 530.9,556.4 545.1,556.4 M511.0,544.8 496.8,547.8 486.8,544.8 481.1,538.8 481.1,529.9 M472.6,513.7 461.2,510.1 M496.8,547.8 496.8,556.4 508.1,561.9 516.7,550.7 M496.8,556.4 485.4,559.2 479.7,550.7 486.8,544.8 M485.4,559.2 479.7,567.3 486.8,572.5 498.2,569.9 508.1,561.9 M479.7,550.7 471.2,556.4 467.5,553.6 M471.2,556.4 469.7,567.3 466.9,572.5 457.4,574.6 M469.7,567.3 479.7,567.3 M486.8,572.5 481.1,580.1 472.6,582.6 465.2,580.1 M481.1,580.1 486.8,585.0 495.3,582.6 498.2,569.9 M486.8,585.0 484.0,592.1 473.4,592.6 M484.0,592.1 486.8,599.0 485.4,603.5 M486.8,599.0 496.8,596.7 499.6,603.5 491.4,603.9 M496.8,596.7 499.6,589.8 495.3,582.6 M499.6,589.8 508.1,587.4 511.0,580.1 509.6,572.5 508.1,561.9 M508.1,587.4 512.4,594.4 509.6,599.0 499.6,603.5 M512.4,594.4 520.9,592.1 515.8,597.7 M520.9,592.1 523.8,585.0 528.1,580.1 540.9,575.1 M523.8,585.0 511.0,580.1 M528.1,580.1 522.4,572.5 509.6,572.5 M499.6,603.5 498.2,612.2 502.5,614.3 509.6,610.0 510.7,604.4 M502.5,614.3 495.3,620.5 488.2,617.2 490.5,613.0 M495.3,620.5 498.2,626.6 493.9,630.5 M495.3,620.5 506.7,618.4 512.7,623.8 M498.2,626.6 508.1,628.5 510.7,625.8 M784.1,453.5 775.5,472.4" fill="none" stroke="#8a8a8a" stroke-opacity="0.5" stroke-width="0.55" stroke-dasharray="1.6 1.3"/>
<path d="M1051.1,607.9 1130.7,607.9 1130.7,606.1 1132.2,609.2 1135.6,609.6 1138.8,610.9 1146.6,612.2 1149.9,611.3 1159.8,615.1 1160.7,618.4 1163.5,620.1 1166.6,622.9 1167.6,630.1 1166.9,632.5 1164.9,635.2 1166.1,637.5 1172.3,635.2 1176.9,632.9 1176.4,631.5 1177.4,630.1 1182.8,629.9 1184.0,628.2 1188.8,624.6 1197.9,624.6 1199.3,623.3 1201.1,623.3 1202.0,618.9 1204.3,614.5 1207.0,614.9 1208.4,616.2 1208.4,620.9 1209.4,622.1 1210.3,624.0 1210.9,625.4 M1000.2,488.3 1000.2,551.9 1001.7,552.4 1005.6,551.9 1010.2,554.7 1013.3,556.7 1015.9,555.3 1020.1,557.5 1021.9,562.5 1025.0,567.3 1026.4,572.0 1031.0,574.6 1031.5,578.6 1029.8,581.6 M1068.2,670.3 1075.0,669.6 1074.8,670.4 1085.4,674.3 1093.5,674.3 1093.5,672.8 1098.4,672.8 1102.6,676.7 1104.3,680.2 1107.8,681.9 1110.0,679.5 1112.9,679.3 1114.3,680.8 1115.4,682.9 1118.3,686.8 1119.4,690.3 1122.0,691.4 1125.0,691.7 M1139.0,726.4 1139.0,724.3 1140.4,721.9 1144.0,721.9 1142.5,718.4 1142.5,716.7 1147.7,716.7 1148.6,716.1 1150.1,714.6 M1147.7,716.7 1147.6,722.4 1148.4,722.4 M1150.1,723.0 1147.7,724.7 1147.1,726.8 1145.0,728.7 M1147.1,726.8 1149.6,726.9 1151.7,728.4 1151.6,729.7 M1164.8,725.0 1160.1,725.9 1156.1,728.6 1153.8,730.6 1153.0,730.9 M1157.5,736.4 1160.4,736.7 1162.4,737.4 1163.2,736.9 M1166.5,740.9 1165.6,742.8 1165.5,745.2 M1181.3,743.5 1181.4,745.7 1179.7,747.7 M1198.3,734.3 1195.1,736.7 1193.8,742.2 1195.2,747.1 1196.5,748.2 1201.9,748.1 1203.9,750.5 1209.4,750.8 1208.4,760.2 1211.1,764.8 M1177.0,764.1 1180.3,765.9 1184.0,767.2 1187.1,768.5 1193.1,775.2 1201.9,774.5 1202.3,780.2 1203.8,771.6 1204.7,766.5 1202.6,763.4 1207.3,763.4 1210.4,762.5 1211.1,764.8 1212.7,766.1 1217.8,764.8 M1172.9,777.9 1172.5,780.7 1176.3,782.3 1178.9,776.7 1184.6,776.6 1187.4,770.9 1187.1,768.5 M1202.3,780.2 1199.6,780.7 1191.4,788.4 1193.1,795.1 1195.9,796.8 1200.5,799.5 1203.5,799.5 1205.9,804.0 1205.3,809.0 1204.5,812.2 1204.7,814.9 1203.6,818.8 1201.2,821.3 M1203.5,799.5 1206.5,799.7 1211.9,796.2 1215.3,795.9 1217.0,799.7 M1203.6,818.8 1206.2,823.3 1206.5,829.0 1208.2,835.0 1210.2,834.8 1209.9,839.5 1206.7,840.1 1206.7,848.0 1203.0,852.8 1201.1,861.0 1201.9,867.7 1201.1,874.6 1199.1,881.6 1198.2,888.8 1196.9,896.3 1197.1,905.9 1197.6,913.9 1196.5,920.0 1193.1,928.5 1195.6,936.5 1196.8,942.0 1202.2,942.0 1206.7,943.5 M1206.2,945.0 1206.2,955.8 M1210.2,834.8 1213.0,831.8 1217.8,832.7 M448.7,673.4 448.1,681.3 448.4,704.0 482.3,704.0 M448.4,704.0 448.4,710.1 445.6,710.1 445.6,711.6 422.8,699.6 420.0,700.9 411.4,699.4 406.5,696.9 404.0,691.3 404.5,679.0 404.5,677.9 408.3,672.0 410.2,668.2 M404.5,677.9 401.1,671.4 398.6,664.2 401.9,655.1 M411.4,699.4 389.4,712.7 386.4,711.8 385.8,710.1 380.6,706.8 363.6,694.7 352.6,687.4 352.6,686.2 352.6,682.9 355.7,680.6 360.8,680.0 364.2,676.7 367.1,673.0 373.7,671.7 372.7,668.7 372.5,664.9 371.0,661.5 M339.8,686.2 352.6,686.2 M352.6,687.4 352.6,691.6 343.2,691.6 343.2,699.6 340.3,700.9 340.3,706.1 329.1,706.1 M363.6,694.7 358.8,694.7 361.7,723.6 350.8,723.6 346.9,723.9 343.7,724.7 342.5,725.7 338.3,721.8 334.9,720.2 331.8,720.6 330.4,721.9 M342.5,725.7 344.9,732.7 338.3,731.8 333.8,731.9 329.8,732.9 M330.1,729.1 334.6,728.6 338.0,729.9 334.1,730.6 329.8,730.6 M338.3,731.8 338.3,734.7 334.9,736.7 334.6,736.9 M344.9,732.7 352.0,733.7 354.5,738.5 359.7,739.0 361.7,738.3 364.8,733.8 366.2,729.4 374.5,724.7 377.9,725.0 381.0,724.0 387.3,724.2 389.0,721.2 389.4,712.7 M377.9,725.0 380.1,729.7 383.6,732.7 387.5,734.7 389.0,729.4 392.4,728.6 397.2,730.6 404.3,730.0 416.0,728.9 416.0,723.3 421.4,719.4 421.7,710.1 420.5,707.1 420.0,700.9 M387.5,734.7 385.1,742.5 385.0,750.0 M361.7,738.3 365.1,740.8 369.3,738.7 369.2,736.7 376.9,736.4 384.1,734.1 383.6,732.7 M368.5,753.7 369.9,745.4 369.6,741.1 369.3,738.7 M380.7,750.8 379.0,743.9 376.9,736.4 M382.0,750.1 381.9,742.5 379.9,736.7 384.1,734.1 M339.5,742.4 343.5,739.6 347.1,742.5 348.0,743.9 344.6,748.5 M348.0,743.9 350.6,746.5 353.1,746.8 353.4,750.2 356.0,751.7 355.8,755.8 M353.1,746.8 354.5,738.5 M445.6,711.6 445.6,723.0 442.7,723.6 440.2,728.9 439.6,731.8 442.4,736.9 435.3,742.5 430.2,745.4 421.4,746.8 421.4,739.6 417.7,739.6 420.3,735.3 417.4,730.6 416.0,728.9 M417.4,730.6 416.0,736.7 413.7,742.5 410.3,748.5 406.3,750.0 401.8,754.8 M421.4,746.8 420.0,756.8 423.1,761.9 415.1,761.9 409.6,761.9 405.2,761.7 M409.6,761.9 409.6,765.4 405.2,765.4 M415.1,761.9 418.3,765.6 418.3,773.9 411.4,775.0 408.9,779.4 M442.4,736.9 446.1,743.4 455.4,754.0 441.3,756.5 432.5,753.7 430.2,758.2 424.5,758.0 423.1,761.9 M430.2,758.2 427.9,768.2 423.4,773.6 420.8,780.4 418.3,782.2 414.3,782.4 413.7,781.3 412.0,782.4 M413.7,781.3 412.9,784.6 412.0,784.6 M446.1,743.4 452.7,740.8 456.9,739.6 462.6,741.1 465.5,739.6 470.5,733.2 471.7,733.8 474.3,741.1 476.9,733.8 479.7,731.8 481.1,727.1 481.0,725.3 482.5,719.1 487.1,716.1 M481.0,725.3 486.8,726.5 491.1,726.5 497.9,732.4 M499.9,731.8 496.2,736.7 499.6,736.7 500.3,735.4 M499.6,736.7 500.2,741.1 511.0,745.4 513.8,745.4 505.3,754.0 496.8,756.8 496.5,757.0 489.7,758.2 479.7,755.7 479.6,755.1 477.7,752.8 473.2,749.1 471.2,745.4 474.3,741.1 M496.5,757.0 493.9,768.2 495.5,772.9 M479.6,755.1 474.0,756.2 475.4,764.8 474.0,767.3 473.9,771.0 484.3,776.7 484.5,777.9 488.8,781.5 M474.0,756.2 465.5,758.2 465.1,758.2 466.0,761.9 462.5,765.9 461.5,772.2 M464.1,771.0 473.9,771.0 M461.5,772.2 463.8,771.3 464.9,775.0 464.1,774.7 459.8,776.2 461.5,772.2 M464.9,775.0 464.9,777.6 461.8,780.7 460.8,780.7 459.8,776.2 M464.1,774.7 464.1,771.0 M455.4,754.0 459.8,756.0 465.1,758.2 M465.5,791.9 470.9,795.1 473.7,795.6 M476.7,801.3 484.8,800.8 492.2,798.2 M414.3,784.9 424.5,785.0 425.7,788.2 427.1,791.3 432.5,791.0 435.0,788.2 439.3,789.0 440.4,800.3 445.6,799.4 451.3,802.6 459.8,806.7 462.1,803.2 458.4,802.6 459.5,792.5 464.9,791.9 M445.6,799.4 445.6,805.5 439.9,805.5 439.9,814.9 443.9,819.1 M410.7,818.0 417.7,818.5 429.6,818.5 437.0,820.3 437.0,832.4 434.2,832.4 434.2,840.9 434.2,852.5 428.5,854.1 425.9,851.5 424.1,853.2 M437.0,820.3 444.4,821.2 449.1,819.7 453.2,820.3 459.2,815.8 463.8,813.1 471.7,808.4 472.0,801.4 472.0,796.8 470.9,795.1 M434.2,840.9 436.2,847.5 442.7,842.6 450.1,843.6 452.4,840.4 460.8,833.0 456.1,827.8 451.8,824.8 449.1,819.7 M460.8,833.0 466.3,833.6 469.7,827.8 470.7,823.3 470.9,816.4 466.3,814.3 463.8,813.1 M466.3,833.6 468.3,841.7 470.9,847.5 M471.7,808.4 475.1,810.2 477.7,809.6 479.1,814.3 477.4,817.6 474.9,814.3 475.1,810.2 M476.7,801.3 476.9,804.0 M458.9,853.2 456.1,854.1 454.1,856.4 456.1,859.9 457.8,858.7 460.4,857.4 460.9,854.8 458.9,853.2 M468.2,844.7 464.9,845.8 465.8,849.0 468.2,849.0 468.2,844.7 M476.7,680.3 474.7,674.7 M474.9,674.4 476.6,673.4 478.4,670.4 478.6,668.3 479.1,667.6 M476.9,680.3 480.0,681.3 481.8,679.0 484.0,678.7 485.4,677.0 482.5,673.7 488.2,672.0 488.8,671.0 487.7,667.3 482.0,671.0 479.7,669.7 478.7,669.7 M487.7,667.3 493.6,663.9 495.1,659.0 494.8,656.2 497.8,654.4 499.0,653.7 504.7,654.4 504.2,652.3 503.6,646.1 504.2,644.6 504.7,645.2 M478.6,668.3 480.6,667.6 481.0,663.2 479.6,663.0 M480.2,656.2 480.8,657.6 482.5,655.5 487.4,655.8 493.9,654.4 497.8,654.4 M504.7,654.4 506.4,658.3 508.1,661.5 506.7,665.3 508.4,668.7 512.4,671.0 513.0,675.4 515.3,678.7 M488.2,672.0 492.2,675.0 504.4,681.3 509.7,681.6 513.0,683.4 515.0,683.4 M509.7,681.6 513.0,678.3 513.8,678.7 M480.0,681.3 476.7,680.8 M523.2,696.0 524.1,697.1 526.9,701.1 534.2,702.2 534.3,701.9 533.7,710.1 525.2,713.1 516.7,717.6 512.4,717.9 505.9,718.2 501.6,717.9 499.0,720.9 M524.6,697.8 524.1,697.1 M534.3,701.9 535.9,697.2 536.6,697.2 537.4,694.9 536.9,691.4 M533.7,710.1 525.2,713.1 528.3,720.2 M504.7,645.2 508.1,647.6 509.6,648.1 511.8,646.1 513.8,645.0 514.7,646.1 516.3,649.6 M504.2,644.6 501.5,643.9 500.9,639.7 498.2,638.2 495.5,638.2 M500.9,639.7 505.3,639.4 509.6,639.0 509.3,636.9 513.8,637.5 515.4,636.9 M505.3,639.4 506.7,641.6 509.3,645.7 509.6,647.9 M509.6,639.0 506.4,640.1 505.3,639.4 M491.1,630.9 497.9,631.7 502.5,634.0 505.9,633.6 509.3,636.9 M516.4,650.1 530.6,653.3 540.0,650.5 544.0,652.6 551.4,656.2 551.7,659.7 M551.7,659.7 550.0,663.5 549.4,666.3 550.4,674.0 552.8,674.4 550.4,679.2 555.9,683.6 557.4,687.7 557.1,689.7 552.5,694.1 M551.7,659.7 554.5,660.8 556.8,658.7 563.9,653.7 570.2,654.1 570.7,654.4 M530.6,653.3 535.2,651.2 536.6,646.5 535.2,639.0 527.8,639.0 M535.2,639.0 536.6,624.6 544.0,622.1 551.1,630.5 561.9,629.7 565.0,635.6 570.7,639.4 576.4,640.1 579.0,635.2 581.5,635.6 579.8,633.4 586.4,633.2 588.4,631.7 592.9,632.9 602.0,634.4 605.7,636.3 M536.6,624.6 548.0,639.0 548.0,635.2 553.4,639.4 558.5,646.8 564.2,650.1 566.5,652.6 570.2,654.1 571.9,650.1 569.3,645.7 573.6,643.5 577.8,643.5 578.4,645.3 586.9,646.1 587.5,642.0 M570.7,654.4 570.2,654.1 M577.8,643.5 584.9,641.3 586.9,646.1 590.3,649.4 590.6,653.3 M570.7,654.4 575.0,654.8 578.4,650.5 580.4,649.7 581.0,655.8 584.1,654.8 586.7,653.3 590.6,653.3 591.8,655.1 M550.4,679.2 559.6,680.6 562.2,680.3 565.6,680.2 567.0,674.4 571.3,672.4 574.4,673.4 575.0,668.3 577.3,668.3 579.5,665.3 579.3,662.2 579.8,658.3 581.0,655.8 M591.8,655.1 593.5,658.3 598.6,660.1 M589.2,654.8 591.8,655.1 M573.0,696.9 579.3,696.9 577.8,685.5 582.7,686.1 586.1,679.0 589.5,675.4 589.8,670.4 591.8,670.4 588.6,668.7 587.6,662.8 596.3,661.8 598.6,660.1 M598.6,660.1 599.2,660.8 601.7,664.2 603.1,670.4 600.3,670.0 601.7,674.7 607.7,678.0 608.8,677.4 627.9,685.5 629.9,684.9 630.2,687.4 632.2,685.8 638.1,684.2 639.3,685.8 646.4,681.0 650.7,680.6 654.1,684.5 M607.7,678.0 605.1,683.2 614.2,686.8 625.1,690.5 627.9,690.1 627.9,685.5 M630.2,687.4 631.0,689.0 639.3,689.0 639.3,685.8 M627.9,690.1 627.9,690.9 630.5,690.6 632.9,693.8 639.6,694.2 639.6,696.6 636.7,701.1 636.6,698.6 630.5,697.7 628.7,694.2 627.9,690.9 M630.5,697.7 630.7,705.3 M636.7,701.1 640.0,698.8 639.6,706.2 639.7,706.8 M640.0,698.8 642.7,698.2 645.2,697.5 648.1,689.3 653.5,687.7 654.1,684.5 656.3,683.6 658.0,686.5 658.0,692.2 655.2,697.5 658.0,698.2 665.0,706.6 M662.6,702.8 665.0,706.6 666.9,706.5 667.9,702.8 672.3,701.7 677.0,700.0 680.8,701.9 684.5,705.4 M665.0,706.6 662.0,709.1 663.5,708.9 665.4,711.6 664.6,717.0 667.4,716.1 671.4,714.9 675.4,717.9 677.1,722.1 676.5,726.9 680.2,726.8 683.2,725.9 M666.9,706.5 667.9,702.8 M667.9,702.8 670.3,707.1 674.8,709.2 673.1,711.3 677.7,715.5 680.5,720.3 683.4,724.7 683.2,725.9 683.4,730.9 680.1,734.1 676.0,737.0 674.3,738.3 M676.5,726.9 670.3,726.9 668.4,730.0 669.6,733.8 670.0,734.8 M662.0,709.1 656.1,710.7 655.2,716.7 657.9,720.9 656.6,724.2 659.5,730.3 660.7,734.4 657.8,739.6 M662.0,750.0 662.3,749.1 665.0,751.8 667.7,750.4 M544.0,622.1 515.3,618.4 514.4,613.0 510.7,604.4 512.4,601.3 515.8,597.7 524.4,600.8 529.5,596.7 533.7,599.5 544.0,598.6 548.0,600.4 552.2,597.7 550.8,591.2 551.4,585.5 559.3,584.5 573.6,583.5 586.1,586.9 600.6,598.1 605.1,599.9 609.1,599.0 614.2,599.9 619.6,605.2 625.6,607.0 M512.7,623.8 515.3,618.4 M625.6,607.0 613.4,615.5 620.5,616.4 612.3,622.1 604.6,623.8 605.7,625.4 607.1,631.7 605.4,635.6 605.7,636.3 598.0,640.1 590.3,642.6 587.5,645.3 586.9,646.1 M625.6,607.0 627.0,607.4 629.0,603.5 633.3,601.5 639.8,599.5 646.1,600.8 647.5,603.5 654.3,603.5 658.6,595.4 658.6,594.0 668.3,601.7 677.1,602.2 685.9,605.2 695.9,607.0 702.4,602.2 709.2,604.4 712.4,605.7 M627.0,607.4 629.3,610.5 636.1,616.8 635.3,622.5 643.3,624.6 651.2,633.6 661.7,634.0 676.0,637.9 688.5,633.2 695.6,630.9 695.3,624.6 700.4,624.4 718.1,617.2 714.4,612.6 706.1,613.4 707.3,610.0 712.4,605.7 714.7,603.9 716.6,600.8 721.2,588.3 728.9,587.4 734.6,592.6 740.0,605.2 747.1,608.3 749.9,613.4 760.7,610.5 759.0,615.1 755.9,624.6 752.2,623.3 750.8,628.5 750.2,632.9 748.9,634.6 M748.9,634.6 749.1,635.2 M748.9,634.6 747.1,632.9 741.7,636.3 742.0,638.6 738.3,637.1 735.7,640.5 731.0,644.1 M742.4,650.1 738.8,650.1 736.3,652.1 M464.9,487.0 459.5,493.5 456.9,484.5 450.7,492.7 443.3,496.6 435.9,493.1 434.2,498.6 428.8,498.2 423.9,508.7 418.5,515.1 417.4,529.3 413.4,529.3 412.0,533.8 411.9,543.6 413.4,547.8 410.9,554.7 409.4,558.6 M434.2,498.6 444.4,501.3 445.6,510.1 446.0,517.2 M435.9,493.1 437.9,491.9 443.3,496.6 M459.5,493.5 458.1,494.3 460.6,500.5 462.6,503.5 462.3,515.1 461.5,522.0 462.3,524.0 462.6,531.2 467.2,536.3 460.4,546.0 456.4,550.4 M457.1,556.7 456.1,559.2 455.2,565.4 455.1,567.3 452.7,567.0 450.1,564.6 446.6,565.2 M455.1,567.3 456.5,568.3 457.4,574.6 453.0,576.6 448.4,573.0 439.9,573.0 437.2,574.7 M453.0,576.6 453.5,578.6 450.7,584.0 444.1,585.2 442.2,583.0 441.6,580.1 437.9,578.6 M442.2,583.0 433.2,583.0 M457.4,574.6 465.2,576.1 465.2,580.1 469.7,586.9 466.6,589.3 467.8,594.0 473.4,592.6 474.9,597.4 478.6,601.7 485.4,603.5 491.4,603.9 491.1,607.4 490.5,613.0 486.0,616.0 M467.8,594.0 464.1,596.7 444.4,596.3 444.7,594.0 444.1,585.2 M444.4,596.3 445.9,601.7 441.6,607.9 440.3,611.7 442.4,610.2 448.1,612.4 453.0,611.1 456.2,610.2 462.9,618.0 462.6,618.9 457.5,622.7 461.6,623.1 M456.2,610.2 460.4,613.0 462.9,618.0 M457.5,622.7 457.5,618.0 453.0,611.1 M433.2,583.0 433.1,582.8 M417.8,585.5 417.4,590.5 418.7,592.6 419.8,599.0 411.7,602.2 416.6,608.7 425.4,609.6 430.9,605.7 441.4,606.1 441.6,607.9 M419.8,599.0 422.8,602.2 425.4,601.5 430.2,603.9 430.9,605.7 M416.6,608.7 415.7,609.6 414.3,614.3 404.5,614.1 398.9,613.9 400.6,607.9 395.4,605.9 394.7,602.8 394.4,600.1 394.4,595.1 397.8,588.8 M404.5,614.1 404.3,616.2 407.0,617.0 412.3,617.2 416.3,618.4 418.7,617.8 423.1,617.0 424.1,613.4 425.9,612.2 425.4,609.6 M423.1,617.0 424.2,619.1 430.8,620.1 430.9,620.9 434.9,619.9 442.4,612.4 440.3,611.7 M425.9,612.2 430.9,613.2 431.3,611.9 435.6,609.8 442.4,610.2 M416.3,618.4 420.0,618.4 424.2,619.1 420.8,622.5 416.0,622.7 M424.2,619.1 426.5,620.9 430.9,620.9 431.6,623.8 431.3,625.2 423.7,623.8 425.1,630.3 429.8,634.2 M431.3,625.2 432.3,625.0 431.9,630.5 430.1,634.6 M430.9,620.9 434.9,619.9 438.2,625.4 441.7,627.8 441.0,629.7 440.9,635.0 438.0,635.2 435.2,633.1 433.2,634.4 432.5,636.9 M433.2,634.4 434.5,633.8 435.9,635.6 435.8,636.7 436.2,639.7 437.0,640.5 434.5,645.0 M435.9,635.6 438.0,635.2 M437.0,640.5 442.4,638.8 447.3,638.8 452.3,637.5 452.3,640.1 M442.4,638.8 440.9,635.0 M452.3,637.5 455.0,636.3 456.9,636.3 M441.0,629.7 441.7,627.8 442.7,629.7 449.8,629.3 455.0,628.2 458.7,629.5 M438.2,625.4 441.9,626.6 441.7,627.8 M386.8,597.4 391.5,596.7 394.4,600.1 M384.6,598.8 389.1,602.6 393.8,605.5 395.4,605.9 400.6,607.9 M396.8,620.5 394.7,618.6 398.9,613.9 M396.6,621.1 397.2,620.9 401.3,620.5 403.8,618.6 407.0,617.0 M398.8,629.4 399.2,628.2 396.2,624.2 396.6,621.1 396.8,620.5 M372.2,631.1 376.4,632.9 379.1,633.6 381.4,634.6 386.3,634.6 M352.1,636.9 358.7,636.5 357.7,640.1 357.4,645.2 357.5,647.6 357.4,650.5 356.3,654.1 M359.9,584.5 356.5,584.5 354.0,582.8 356.7,579.8 M778.4,775.6 778.4,786.2 777.9,787.9 778.4,794.2 M711.7,756.4 706.4,756.0 705.8,759.7 703.3,764.2 696.2,765.2 691.8,765.6 689.2,763.4 689.2,762.3 M701.9,755.1 703.3,756.8 705.4,754.4 M730.2,795.2 733.1,794.9 732.7,793.8" fill="none" stroke="#404146" stroke-width="0.75" stroke-linejoin="round"/>
<g fill="none" stroke="#1b2f45" stroke-opacity="0.75" stroke-width="1" stroke-dasharray="5 3">
<path d="M292,768.2H1216"/>
<path d="M889.3,258V439.1L920.1,501.8V520.8L860.1,589.1L889.3,611.9V772H946.3V762.5H937.2V752.3H956.9L977.8,802.4H963.4V791.7H922.7Q914,793 912,803L910.2,815.7V908.7L889.3,937.1V1068"/>
</g>
<g font-size="12.2" fill="#3a3a3a" fill-opacity="0.5" text-anchor="middle" letter-spacing="1.5">
<text x="503" y="292.5">Arctic Ocean</text>
<text x="1018.5" y="292.5">Arctic Ocean</text>
<text x="926.5" y="648">North</text>
<text x="926.5" y="660.5">Pacific</text>
<text x="926.5" y="673.5">Ocean</text>
<text x="334.8" y="845.5">South</text>
<text x="334.8" y="858.8">Atlantic</text>
<text x="334.8" y="871.7">Ocean</text>
<text x="604.4" y="830.3">Indian</text>
<text x="604.4" y="842.4">Ocean</text>
<text x="434.3" y="990.5">Southern</text>
<text x="434.3" y="1003">Ocean</text>
<text x="1010.8" y="847.4">South</text>
<text x="1010.8" y="860.3">Pacific</text>
<text x="1010.8" y="873.2">Ocean</text>
<text x="936.8" y="1036.5">Southern</text>
<text x="936.8" y="1049.5">Ocean</text>
</g>
<g font-size="9.1" font-weight="bold" fill="#bcbcbc" stroke="#16181d" stroke-width="2" stroke-linejoin="round" paint-order="stroke" text-anchor="middle" letter-spacing="-0.32">
<text x="324.2" y="527">Iceland</text>
<text x="451.4" y="510">Finland</text>
<text x="424.8" y="531">Sweden</text>
<text x="400.1" y="550.2">Norway</text>
<text x="365.9" y="574.5">United</text>
<text x="365.9" y="583.3">Kingdom</text>
<text x="405.8" y="609">Germany</text>
<text x="434" y="600">Poland</text>
<text x="469.2" y="609">Ukraine</text>
<text x="384.2" y="625.4">France</text>
<text x="411.5" y="635.3">Italy</text>
<text x="367" y="641">Spain</text>
<text x="477.9" y="651">Türkiye</text>
<text x="644.2" y="545">Russia</text>
<text x="568.3" y="616">Kazakhstan</text>
<text x="670.4" y="621">Mongolia</text>
<text x="672.3" y="657.8">China</text>
<text x="736" y="662">South Korea</text>
<text x="776.6" y="650">Japan</text>
<text x="499.6" y="671.7">Iraq</text>
<text x="531.5" y="678.5">Iran</text>
<text x="570.2" y="668.3">Afghanistan</text>
<text x="572.8" y="686.8">Pakistan</text>
<text x="382.3" y="688.3">Algeria</text>
<text x="426.7" y="691.8">Libya</text>
<text x="462" y="688.3">Egypt</text>
<text x="506.4" y="703.9">Saudi Arabia</text>
<text x="602" y="706.2">India</text>
<text x="664" y="715.3">Thailand</text>
<text x="371.6" y="721">Mali</text>
<text x="405.8" y="721">Niger</text>
<text x="432.4" y="733.2">Chad</text>
<text x="463.5" y="724">Sudan</text>
<text x="400.1" y="744.2">Nigeria</text>
<text x="490" y="747.2">Ethiopia</text>
<text x="441.5" y="776.8">DRC</text>
<text x="485.1" y="770.3">Kenya</text>
<text x="482.5" y="791.3">Tanzania</text>
<text x="424" y="807.2">Angola</text>
<text x="421.7" y="829.2">Namibia</text>
<text x="445.7" y="841">Botswana</text>
<text x="514" y="834.5">Madagascar</text>
<text x="432.7" y="874">South Africa</text>
<text x="706.5" y="784">Indonesia</text>
<text x="795.6" y="785.2">Papua New</text>
<text x="795.6" y="795">Guinea</text>
<text x="758.6" y="846.3">Australia</text>
<text x="851" y="893.7">New</text>
<text x="851" y="903.3">Zealand</text>
<text x="1109.5" y="702.8">Mexico</text>
<text x="1184" y="762">Colombia</text>
<text x="1184" y="803.8">Peru</text>
<text x="1200.6" y="852">Chile</text>
<text x="1105" y="585.6">Canada</text>
<text x="1112.6" y="648.6">United States</text>
<text x="1192.3" y="749.1" text-anchor="start">Venezuela</text>
<text x="1203.7" y="820.5" text-anchor="start">Bolivia</text>
<text x="1204.8" y="892.2" text-anchor="start">Argentina</text>
</g>
<path d="M426.0,488.8 437.8,489.6 449.4,491.9 460.3,495.7 470.5,500.6 479.7,506.6 487.8,513.3 494.9,520.5 501.0,528.2 506.1,536.0 510.3,543.9 513.7,551.8 516.2,559.6 518.2,567.2 519.4,574.7 520.2,582.0 520.4,589.0 520.2,595.9 519.6,602.4 518.6,608.8 517.2,614.8 515.6,620.7 513.7,626.3 511.5,631.6 509.1,636.7 506.5,641.6 503.6,646.2 500.6,650.6 497.4,654.7 494.0,658.6 490.5,662.3 486.8,665.8 483.0,669.0 479.1,672.0 475.1,674.7 470.9,677.2 466.7,679.5 462.4,681.6 458.0,683.4 453.5,684.9 449.0,686.3 444.5,687.4 439.9,688.2 435.3,688.8 430.6,689.2 426.0,689.3 421.3,689.2 416.7,688.8 412.0,688.2 407.4,687.4 402.9,686.3 398.4,684.9 393.9,683.4 389.5,681.6 385.2,679.5 381.0,677.2 376.9,674.7 372.8,672.0 368.9,669.0 365.1,665.8 361.4,662.3 357.9,658.6 354.5,654.7 351.3,650.6 348.3,646.2 345.5,641.6 342.8,636.7 340.4,631.6 338.2,626.3 336.3,620.7 334.7,614.8 333.3,608.8 332.3,602.4 331.7,595.9 331.5,589.0 331.7,582.0 332.5,574.7 333.8,567.2 335.7,559.6 338.3,551.8 341.6,543.9 345.8,536.0 350.9,528.2 357.0,520.5 364.1,513.3 372.2,506.6 381.4,500.6 391.6,495.7 402.5,491.9 414.1,489.6Z" fill="#ff7f50" fill-opacity="0.3" stroke="#ff8250" stroke-width="2.4"/>
<path d="M682.2,643.6 688.4,643.8 694.4,644.6 700.4,646.0 706.2,647.8 711.7,650.1 717.0,652.8 722.0,655.9 726.7,659.4 731.0,663.2 735.0,667.2 738.5,671.5 741.8,676.0 744.6,680.6 747.1,685.3 749.2,690.2 750.9,695.1 752.3,700.1 753.3,705.0 754.0,710.0 754.4,715.0 754.4,719.9 754.2,724.8 753.6,729.6 752.8,734.3 751.6,739.0 750.2,743.5 748.5,747.9 746.6,752.2 744.3,756.4 741.9,760.4 739.2,764.2 736.2,767.9 733.1,771.4 729.7,774.6 726.1,777.7 722.3,780.5 718.3,783.0 714.2,785.3 709.9,787.3 705.5,789.0 701.0,790.4 696.4,791.5 691.7,792.3 687.0,792.8 682.2,793.0 677.5,792.8 672.8,792.3 668.1,791.5 663.5,790.4 658.9,789.0 654.5,787.3 650.3,785.3 646.1,783.0 642.2,780.5 638.4,777.7 634.8,774.6 631.4,771.4 628.2,767.9 625.3,764.2 622.6,760.4 620.1,756.4 617.9,752.2 615.9,747.9 614.2,743.5 612.8,739.0 611.7,734.3 610.8,729.6 610.3,724.8 610.0,719.9 610.1,715.0 610.4,710.0 611.1,705.0 612.2,700.1 613.6,695.1 615.3,690.2 617.4,685.3 619.8,680.6 622.7,676.0 625.9,671.5 629.5,667.2 633.5,663.2 637.8,659.4 642.4,655.9 647.4,652.8 652.7,650.1 658.3,647.8 664.1,646.0 670.0,644.6 676.1,643.8Z" fill="#ff7f50" fill-opacity="0.3" stroke="#ff8250" stroke-width="2.4"/>
<path d="M1163.2,615.8 1164.2,615.8 1165.2,615.9 1166.1,616.1 1167.1,616.4 1168.0,616.7 1168.9,617.1 1169.7,617.5 1170.5,618.0 1171.3,618.6 1172.0,619.2 1172.7,619.9 1173.4,620.6 1173.9,621.3 1174.5,622.1 1174.9,623.0 1175.3,623.8 1175.7,624.7 1175.9,625.6 1176.1,626.5 1176.3,627.4 1176.4,628.3 1176.4,629.2 1176.3,630.2 1176.2,631.1 1176.0,632.0 1175.8,632.8 1175.5,633.7 1175.1,634.5 1174.7,635.3 1174.3,636.1 1173.8,636.8 1173.2,637.5 1172.6,638.2 1172.0,638.8 1171.3,639.3 1170.6,639.9 1169.9,640.3 1169.1,640.7 1168.3,641.1 1167.5,641.4 1166.7,641.7 1165.8,641.9 1165.0,642.0 1164.1,642.1 1163.2,642.1 1162.4,642.1 1161.5,642.0 1160.6,641.9 1159.8,641.7 1158.9,641.4 1158.1,641.1 1157.3,640.7 1156.6,640.3 1155.8,639.9 1155.1,639.3 1154.4,638.8 1153.8,638.2 1153.2,637.5 1152.7,636.8 1152.2,636.1 1151.7,635.3 1151.3,634.5 1150.9,633.7 1150.6,632.8 1150.4,632.0 1150.2,631.1 1150.1,630.2 1150.1,629.2 1150.1,628.3 1150.2,627.4 1150.3,626.5 1150.5,625.6 1150.8,624.7 1151.1,623.8 1151.5,623.0 1152.0,622.1 1152.5,621.3 1153.1,620.6 1153.7,619.9 1154.4,619.2 1155.1,618.6 1155.9,618.0 1156.7,617.5 1157.6,617.1 1158.5,616.7 1159.4,616.4 1160.3,616.1 1161.3,615.9 1162.2,615.8Z" fill="#ff7f50" fill-opacity="0.3" stroke="#ff8250" stroke-width="2.4"/>
<g font-size="14" font-weight="bold" fill="#fff" text-anchor="middle" stroke="#3a2a25" stroke-opacity="0.35" stroke-width="1" paint-order="stroke">
<text x="425.9" y="599" letter-spacing="-0.64">Europe</text>
<text x="682.2" y="710" letter-spacing="-0.27">Asia</text>
<text x="1162.7" y="617" letter-spacing="-0.22">USA - Michigan</text>
</g>
<text x="301.8" y="1060.8" font-size="18.6" fill="#fff" stroke="#fff" stroke-width="0.5" letter-spacing="-0.7">Google</text>
</svg>
<div class="abs" style="left:302px;top:268px;width:168px;height:40px;background:#fff;border-radius:2px;box-shadow:0 1px 4px -1px rgba(0,0,0,.3)"></div>
<div class="abs" style="left:370.5px;top:268px;width:1px;height:40px;background:#e6e6e6"></div>
<div class="abs" style="left:319.6px;top:275.46px;font-size:18px;line-height:27px;letter-spacing:-0.333px;font-weight:bold;color:#000;">Map</div>
<div class="abs" style="left:388.7px;top:275.46px;font-size:18px;line-height:27px;letter-spacing:0.051px;color:#565656;">Satellite</div>
<div class="abs" style="left:1048px;top:267px;width:108px;height:42.6px;background:#fff;border-radius:4px;box-shadow:0 1px 3px rgba(0,0,0,.25)"></div>
<svg class="abs" style="left:1060.5px;top:277.4px" width="21" height="21" viewBox="0 0 24 24" fill="#333"><path d="M15 3l2.3 2.3-2.89 2.87 1.42 1.42L18.7 6.7 21 9V3zM3 9l2.3-2.3 2.87 2.89 1.42-1.42L6.7 5.3 9 3H3zm6 12l-2.3-2.3 2.89-2.87-1.42-1.42L5.3 17.3 3 15v6zm12-6l-2.3 2.3-2.87-2.89-1.42 1.42 2.89 2.87L15 21h6z"/></svg>
<div class="abs" style="left:1088.9px;top:277.18px;font-size:14.5px;line-height:22px;letter-spacing:-0.116px;color:#2b2b2b;-webkit-text-stroke:0.3px #2b2b2b;">FIT ALL</div>
<div class="abs" style="left:1166px;top:268px;width:40px;height:40px;background:#fff;border-radius:2px;box-shadow:0 1px 4px -1px rgba(0,0,0,.3)"></div>
<svg class="abs" style="left:1177px;top:279px" width="18" height="18" viewBox="0 0 18 18" fill="#666"><path d="M0 0h6v2H2v4H0zM12 0h6v6h-2V2h-4zM0 12h2v4h4v2H0zM16 12h2v6h-6v-2h4z"/></svg>
<div class="abs" style="left:1166px;top:1004px;width:40px;height:40px;background:#fff;border-radius:50%;box-shadow:0 1px 4px -1px rgba(0,0,0,.3)"></div>
<svg class="abs" style="left:1173.3px;top:1011.3px" width="25" height="25" viewBox="0 0 28 28" fill="none" stroke="#666" stroke-width="2.7"><path d="M10.3 6.5 14 2.9l3.7 3.6M10.3 21.5 14 25.1l3.7-3.6M6.5 10.3 2.9 14l3.6 3.7M21.5 10.3 25.1 14l-3.6 3.7"/></svg>
<div class="abs" style="left:988px;top:1054px;width:97.9px;height:14px;background:#bcc5d1"></div>
<div class="abs" style="left:993px;top:1054.84px;font-size:10px;line-height:15px;letter-spacing:0.019px;color:#111;">Keyboard shortcuts</div>
<div class="abs" style="left:1087.3px;top:1054px;width:87.4px;height:14px;background:#bcc5d1"></div>
<div class="abs" style="left:1091.3px;top:1054.84px;font-size:10px;line-height:15px;letter-spacing:0.175px;color:#111;">Map Data ©2025</div>
<div class="abs" style="left:1176.4px;top:1054px;width:39.6px;height:14px;background:#bcc5d1"></div>
<div class="abs" style="left:1181.7px;top:1054.84px;font-size:10px;line-height:15px;letter-spacing:0.236px;color:#111;">Terms</div>
<div class="abs" style="left:1232.6px;top:191.57px;font-size:20px;line-height:30px;letter-spacing:-0.081px;color:#212121;">Geofences</div>
<div class="abs" style="left:1232.3px;top:231.95px;font-size:14px;line-height:21px;letter-spacing:0.172px;color:#212121;">List of all created geofences in tenant scope.</div>
<div class="abs" style="left:1231px;top:267px;width:657.5px;height:271.5px;border:1px solid #e0e0e0;border-radius:4px;background:#fff"></div>
<svg class="abs" style="left:1687.4px;top:284px" width="24" height="24" viewBox="0 0 24 24" fill="#4f4f4f" ><path d="M9.5 3A6.5 6.5 0 0 1 16 9.5c0 1.61-.59 3.09-1.56 4.23l.27.27h.79l5 5-1.5 1.5-5-5v-.79l-.27-.27A6.52 6.52 0 0 1 9.5 16 6.5 6.5 0 0 1 3 9.5 6.5 6.5 0 0 1 9.5 3m0 2C7 5 5 7 5 9.5S7 14 9.5 14 14 12 14 9.5 12 5 9.5 5"/></svg>
<svg class="abs" style="left:1728px;top:284px" width="24" height="24" viewBox="0 0 24 24" fill="#4f4f4f" ><path d="M6 13h12v-2H6M3 6v2h18V6M10 18h4v-2h-4z"/></svg>
<svg class="abs" style="left:1767.7px;top:284px" width="24" height="24" viewBox="0 0 24 24" fill="#4f4f4f" ><path d="M16 5v13h5V5M4 18h5V5H4m6 13h5V5h-5z"/></svg>
<svg class="abs" style="left:1807.8px;top:284px" width="24" height="24" viewBox="0 0 24 24" fill="#4f4f4f"><path d="M3 2h18v1.6H3zm0 6.1h18v1.6H3zm0 6.1h18v1.6H3zm0 6.1h18v1.6H3z"/></svg>
<svg class="abs" style="left:1848px;top:284px" width="24" height="24" viewBox="0 0 24 24" fill="#4f4f4f" ><path d="M5 5h5v2H7v3H5zm9 0h5v5h-2V7h-3zm3 9h2v5h-5v-2h3zm-7 3v2H5v-5h2v3z"/></svg>
<div class="abs" style="left:1240.5px;top:329.65px;font-size:14px;line-height:21px;letter-spacing:-0.284px;font-weight:bold;color:#212121;">Name</div>
<svg class="abs" style="left:1281.5px;top:330.5px" width="19" height="19" viewBox="0 0 24 24" fill="#cfcfcf" ><path d="M9 3 5 7h3v7h2V7h3m3 10v-7h-2v7h-3l4 4 4-4z"/></svg>
<svg class="abs" style="left:1305px;top:332px" width="18" height="18" viewBox="0 0 24 24" fill="#cfcfcf" ><path d="M12 16a2 2 0 0 1 2 2 2 2 0 0 1-2 2 2 2 0 0 1-2-2 2 2 0 0 1 2-2m0-6a2 2 0 0 1 2 2 2 2 0 0 1-2 2 2 2 0 0 1-2-2 2 2 0 0 1 2-2m0-6a2 2 0 0 1 2 2 2 2 0 0 1-2 2 2 2 0 0 1-2-2 2 2 0 0 1 2-2"/></svg>
<div class="abs" style="left:1515px;top:329.65px;font-size:14px;line-height:21px;letter-spacing:-0.614px;font-weight:bold;color:#212121;">Radius</div>
<svg class="abs" style="left:1562.5px;top:330.5px" width="19" height="19" viewBox="0 0 24 24" fill="#cfcfcf" ><path d="M9 3 5 7h3v7h2V7h3m3 10v-7h-2v7h-3l4 4 4-4z"/></svg>
<svg class="abs" style="left:1586px;top:332px" width="18" height="18" viewBox="0 0 24 24" fill="#cfcfcf" ><path d="M12 16a2 2 0 0 1 2 2 2 2 0 0 1-2 2 2 2 0 0 1-2-2 2 2 0 0 1 2-2m0-6a2 2 0 0 1 2 2 2 2 0 0 1-2 2 2 2 0 0 1-2-2 2 2 0 0 1 2-2m0-6a2 2 0 0 1 2 2 2 2 0 0 1-2 2 2 2 0 0 1-2-2 2 2 0 0 1 2-2"/></svg>
<div class="abs" style="left:1789.4px;top:329.65px;font-size:14px;line-height:21px;letter-spacing:-0.478px;font-weight:bold;color:#212121;">Actions</div>
<div class="abs" style="left:1233px;top:358px;width:655px;height:1px;background:#dcdcdc"></div>
<div class="abs" style="left:1233px;top:399px;width:655px;height:1px;background:#dcdcdc"></div>
<div class="abs" style="left:1233px;top:440px;width:655px;height:1px;background:#dcdcdc"></div>
<div class="abs" style="left:1233px;top:481px;width:655px;height:1.5px;background:#d4d4d4"></div>
<div class="abs" style="left:1241.7px;top:369px;width:20px;height:20px;border-radius:50%;border:2px solid #ff7f50;background:#ffd9cb"></div>
<div class="abs" style="left:1280.2px;top:368.65px;font-size:14px;line-height:21px;letter-spacing:0.008px;color:#212121;">USA - Michigan</div>
<div class="abs" style="left:1514.6px;top:368.65px;font-size:14px;line-height:21px;letter-spacing:0.213px;color:#212121;">370779</div>
<div class="abs" style="left:1241.7px;top:410px;width:20px;height:20px;border-radius:50%;border:2px solid #ff7f50;background:#ffd9cb"></div>
<div class="abs" style="left:1280.2px;top:409.65px;font-size:14px;line-height:21px;letter-spacing:0.016px;color:#212121;">Asia</div>
<div class="abs" style="left:1514.6px;top:409.65px;font-size:14px;line-height:21px;letter-spacing:0.51px;color:#212121;">2711158</div>
<div class="abs" style="left:1241.7px;top:451px;width:20px;height:20px;border-radius:50%;border:2px solid #ff7f50;background:#ffd9cb"></div>
<div class="abs" style="left:1280.2px;top:450.65px;font-size:14px;line-height:21px;letter-spacing:-0.191px;color:#212121;">Europe</div>
<div class="abs" style="left:1514.6px;top:450.65px;font-size:14px;line-height:21px;letter-spacing:0.213px;color:#212121;">2383156</div>
<div class="abs" style="left:1800px;top:364px;width:12.5px;height:12px;background:#f0b9b9"></div>
<div class="abs" style="left:1812.5px;top:364px;width:12.5px;height:12px;background:#fbeaea"></div>
<div class="abs" style="left:1800px;top:376px;width:12.5px;height:13px;background:#de6868"></div>
<div class="abs" style="left:1812.5px;top:376px;width:12.5px;height:13px;background:#f6d6d8"></div>
<div class="abs" style="left:1788px;top:389px;width:49px;height:11.5px;background:#fcfcfc"></div>
<div class="abs" style="left:1800px;top:401px;width:12.5px;height:13px;background:#f7dadb"></div>
<div class="abs" style="left:1812.5px;top:401px;width:12.5px;height:13px;background:#fcf3f3"></div>
<div class="abs" style="left:1800px;top:414px;width:12.5px;height:12px;background:#dd686a"></div>
<div class="abs" style="left:1812.5px;top:414px;width:12.5px;height:12px;background:#f5d5d6"></div>
<div class="abs" style="left:1800px;top:426px;width:12.5px;height:12.5px;background:#f7dbdc"></div>
<div class="abs" style="left:1812.5px;top:426px;width:12.5px;height:12.5px;background:#fcf4f4"></div>
<div class="abs" style="left:1788px;top:439px;width:49px;height:12px;background:#fcfcfc"></div>
<div class="abs" style="left:1800px;top:451px;width:12.5px;height:13px;background:#e27a7c"></div>
<div class="abs" style="left:1812.5px;top:451px;width:12.5px;height:13px;background:#f7d9da"></div>
<div class="abs" style="left:1800px;top:464px;width:12.5px;height:12px;background:#edabac"></div>
<div class="abs" style="left:1812.5px;top:464px;width:12.5px;height:12px;background:#fbe9e9"></div>
<div class="abs" style="left:1570px;top:500.16px;font-size:16px;line-height:24px;letter-spacing:-0.094px;color:#616161;">Rows per page</div>
<div class="abs" style="left:1685.5px;top:499.65px;font-size:14px;line-height:21px;letter-spacing:-0.287px;color:#212121;">10</div>
<svg class="abs" style="left:1707.5px;top:508.5px" width="11" height="6" viewBox="0 0 11 6"><path d="M0.3 0.3h10.4L5.5 5.7z" fill="#555"/></svg>
<div class="abs" style="left:1744.2px;top:500.15px;font-size:14px;line-height:21px;letter-spacing:0.09px;color:#212121;">1-3 of 3</div>
<svg class="abs" style="left:1816px;top:498.7px" width="24" height="24" viewBox="0 0 24 24" fill="#ababab" ><path d="M15.41 16.58 10.83 12l4.58-4.59L14 6l-6 6 6 6z"/></svg>
<svg class="abs" style="left:1851px;top:498.7px" width="24" height="24" viewBox="0 0 24 24" fill="#ababab" ><path d="M8.59 16.58 13.17 12 8.59 7.41 10 6l6 6-6 6z"/></svg>
</body></html>
